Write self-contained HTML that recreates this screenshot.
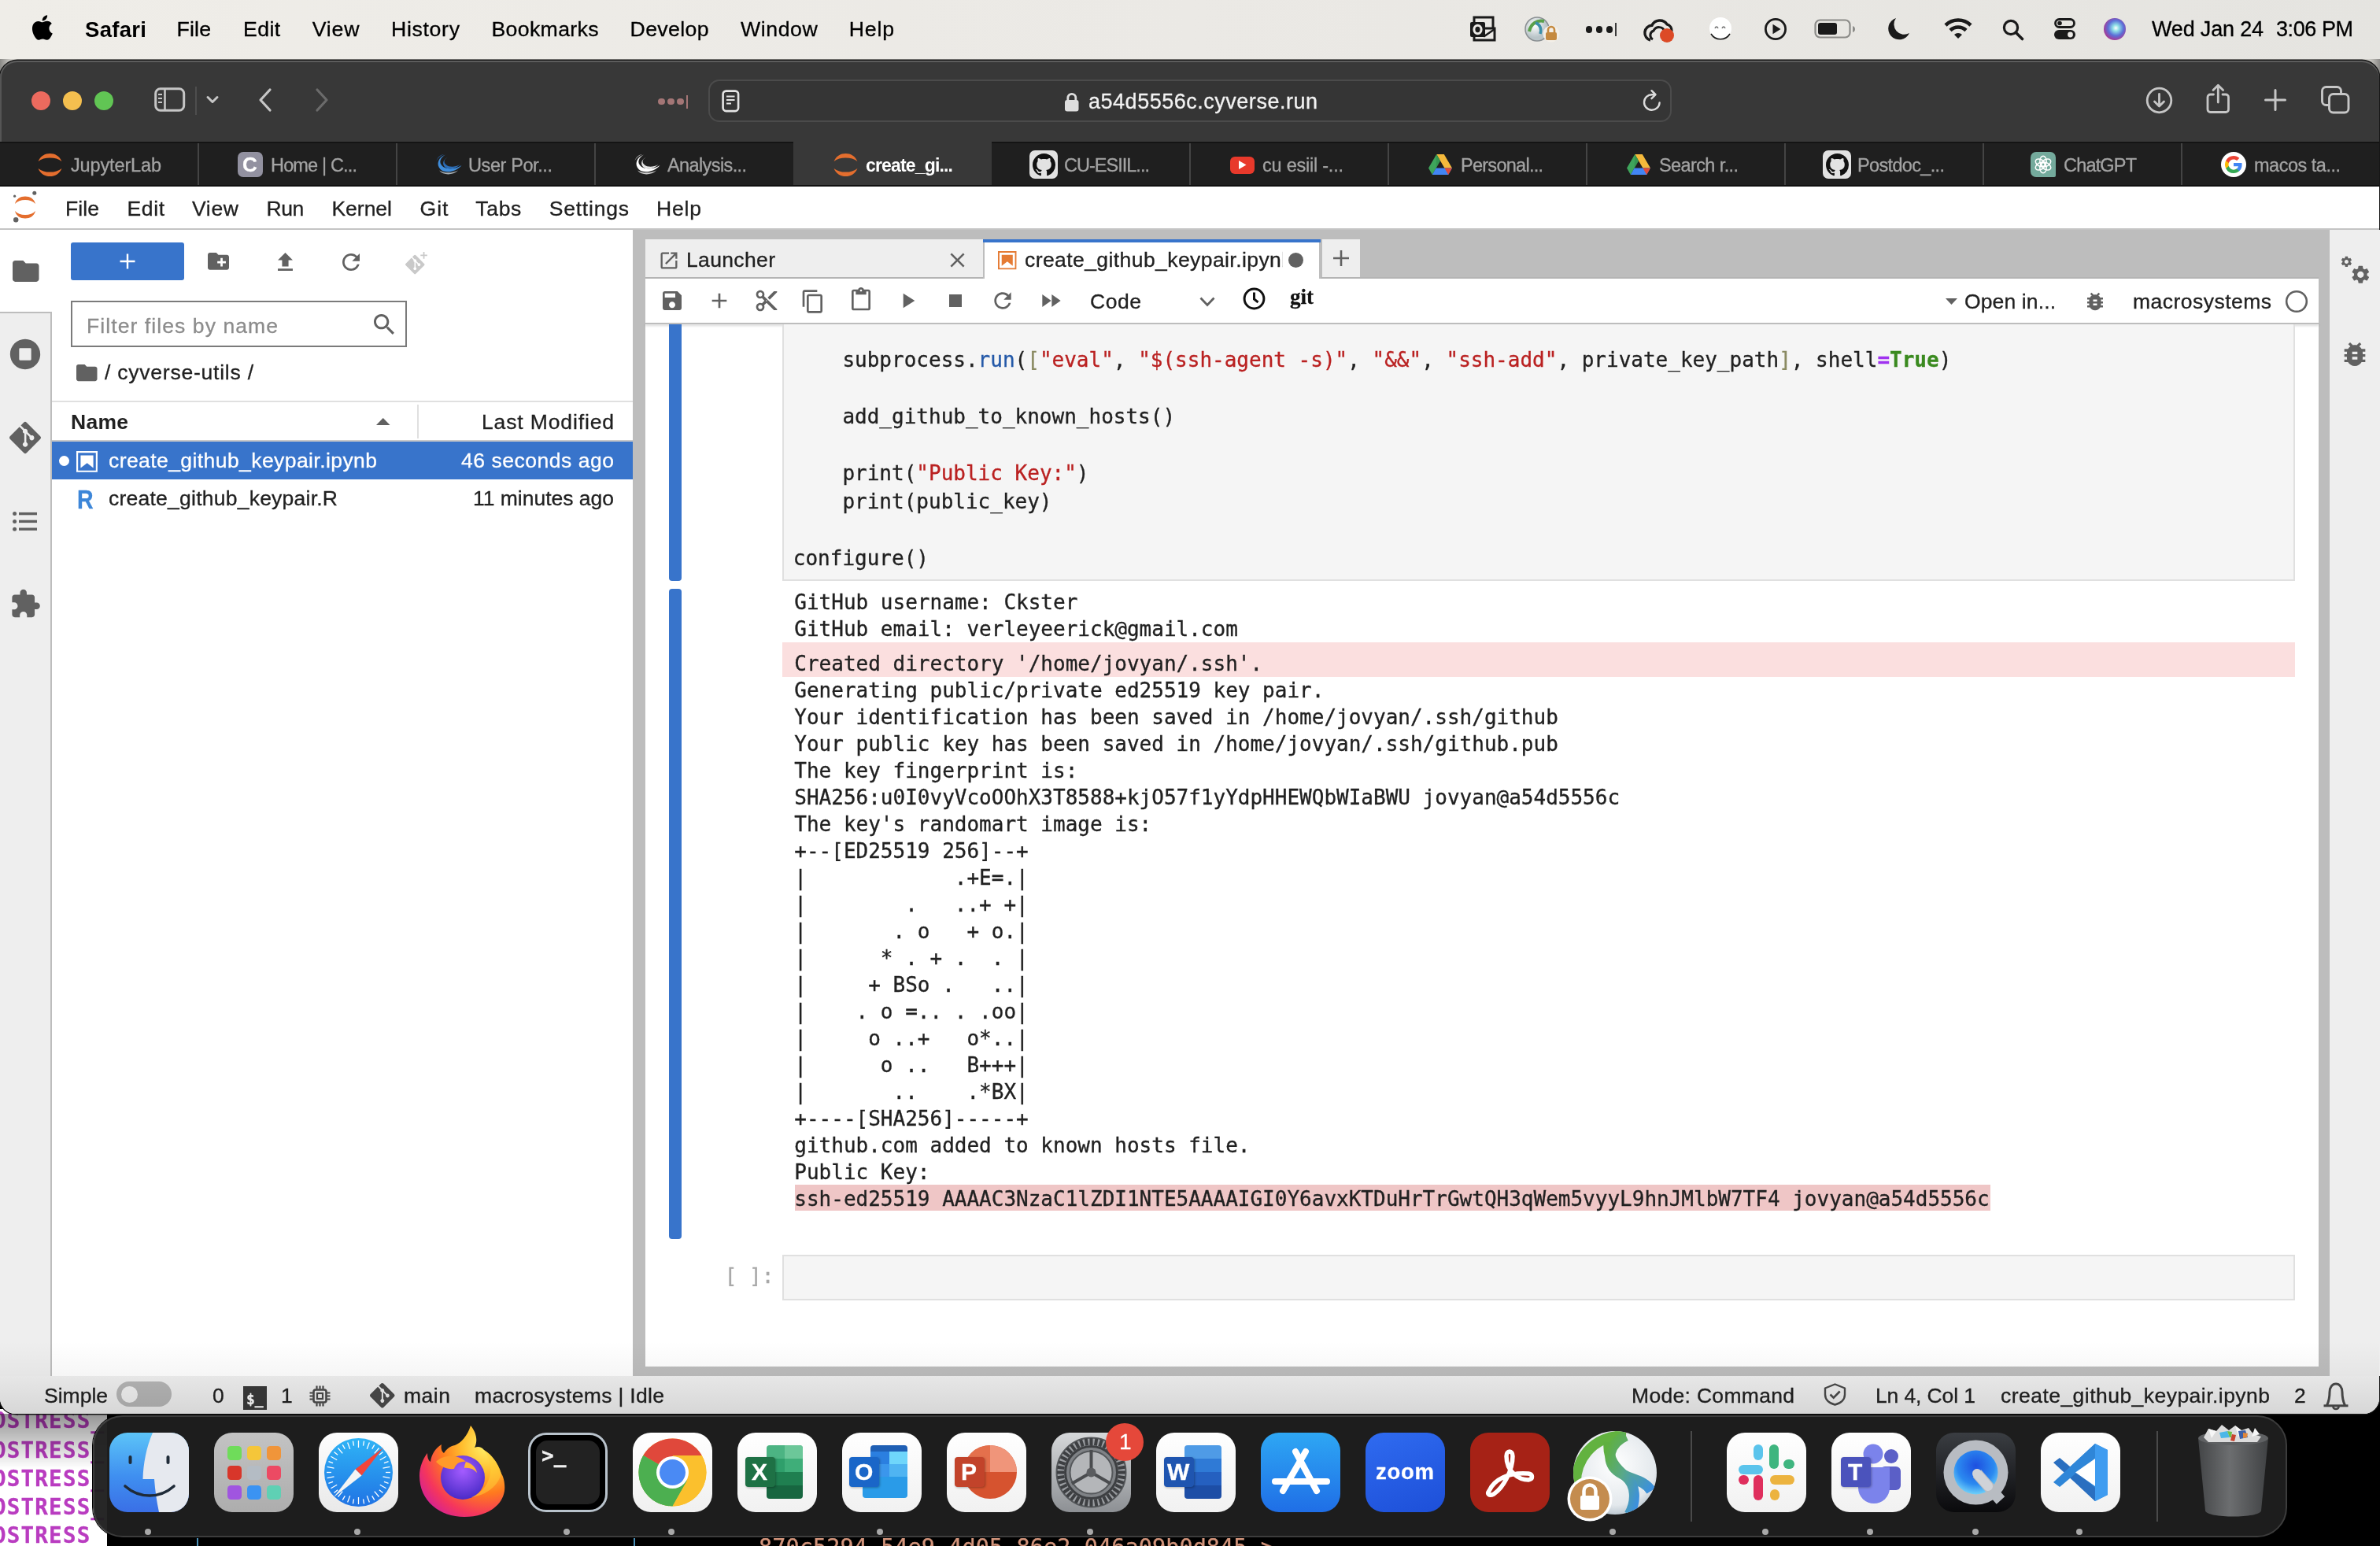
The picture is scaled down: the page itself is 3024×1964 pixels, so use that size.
<!DOCTYPE html>
<html lang="en"><head><meta charset="utf-8"><title>create_github_keypair.ipynb - JupyterLab</title>
<style>
html,body{margin:0;padding:0;}
body{width:3024px;height:1964px;overflow:hidden;background:#000;position:relative;font-family:"Liberation Sans",sans-serif;}
div,span.t,svg,pre{position:absolute;}
span.t{white-space:pre;-webkit-text-stroke:.3px;}
svg{overflow:visible;}
#w{left:0;top:0;width:3024px;height:1964px;will-change:transform;}
pre{-webkit-text-stroke:.32px;margin:0;font-family:"DejaVu Sans Mono","Liberation Mono",monospace;font-size:26px;color:#212121;}
</style></head>
<body>
<div id="w">
<div style="left:0px;top:1790px;width:3024px;height:174px;background:#000;"></div>
<div style="left:0px;top:1790px;width:136px;height:174px;background:#fff;"></div>
<span id="t0" class="t" style="top:1786.49px;font-size:27.5px;line-height:36px;color:#b93cc0;left:-9px;font-weight:700;font-family:'DejaVu Sans Mono', 'Liberation Mono', monospace;letter-spacing:1.221px;">OSTRESS_</span>
<span id="t1" class="t" style="top:1823.99px;font-size:27.5px;line-height:36px;color:#b93cc0;left:-9px;font-weight:700;font-family:'DejaVu Sans Mono', 'Liberation Mono', monospace;letter-spacing:1.221px;">OSTRESS_</span>
<span id="t2" class="t" style="top:1860.49px;font-size:27.5px;line-height:36px;color:#b93cc0;left:-9px;font-weight:700;font-family:'DejaVu Sans Mono', 'Liberation Mono', monospace;letter-spacing:1.221px;">OSTRESS_</span>
<span id="t3" class="t" style="top:1896.49px;font-size:27.5px;line-height:36px;color:#b93cc0;left:-9px;font-weight:700;font-family:'DejaVu Sans Mono', 'Liberation Mono', monospace;letter-spacing:1.221px;">OSTRESS_</span>
<span id="t4" class="t" style="top:1932.49px;font-size:27.5px;line-height:36px;color:#b93cc0;left:-9px;font-weight:700;font-family:'DejaVu Sans Mono', 'Liberation Mono', monospace;letter-spacing:1.221px;">OSTRESS_</span>
<div style="left:0px;top:1796px;width:136px;height:70px;background:linear-gradient(180deg,rgba(0,0,0,.42),rgba(0,0,0,0));"></div>
<div style="left:250px;top:1950px;width:2px;height:14px;background:#4a90b8;"></div>
<div style="left:805px;top:1950px;width:2px;height:14px;background:#4a90b8;"></div>
<span id="t5" class="t" style="top:1947.14px;font-size:28.5px;line-height:37px;color:#d4957c;left:964px;font-family:'DejaVu Sans Mono', 'Liberation Mono', monospace;letter-spacing:0.080px;">870c5294-54e9-4d05-86e2-046a09b0d845 &gt;</span>
<div style="left:0px;top:0px;width:3024px;height:75px;background:linear-gradient(90deg,#efede8 0%,#ebe9e5 50%,#e5e4e0 100%);"></div>
<div style="left:0px;top:75px;width:3024px;height:30px;background:linear-gradient(90deg,#8a8986 0,#cfcdc8 14px,#d4d2cd 50%,#cfcdc8 3010px,#8a8986 100%);"></div>
<svg style="left:41px;top:19px;" width="26" height="32" viewBox="3.9 2 16.4 20"><path d="M18.71 19.5c-.83 1.24-1.71 2.45-3.05 2.47-1.34.03-1.77-.79-3.29-.79-1.53 0-2 .77-3.27.82-1.31.05-2.3-1.32-3.14-2.53C4.25 17 2.94 12.45 4.7 9.39c.87-1.52 2.43-2.48 4.12-2.51 1.28-.02 2.5.87 3.29.87.78 0 2.26-1.07 3.81-.91.65.03 2.47.26 3.64 1.98-.09.06-2.17 1.28-2.15 3.81.03 3.02 2.65 4.03 2.68 4.04-.03.07-.42 1.44-1.38 2.83M13 3.5c.73-.83 1.94-1.46 2.94-1.5.13 1.17-.34 2.35-1.04 3.19-.69.85-1.83 1.51-2.95 1.42-.15-1.15.41-2.35 1.05-3.11z" fill="#000"/></svg>
<span id="t6" class="t" style="top:19.67px;font-size:27.5px;line-height:36px;color:#000;left:108px;font-weight:700;letter-spacing:0.312px;-webkit-text-stroke:0;">Safari</span>
<span id="t7" class="t" style="top:20.44px;font-size:26.7px;line-height:35px;color:#000;left:224.6px;letter-spacing:0.128px;">File</span>
<span id="t8" class="t" style="top:20.44px;font-size:26.7px;line-height:35px;color:#000;left:308.9px;letter-spacing:0.467px;">Edit</span>
<span id="t9" class="t" style="top:20.44px;font-size:26.7px;line-height:35px;color:#000;left:396.7px;letter-spacing:0.808px;">View</span>
<span id="t10" class="t" style="top:20.44px;font-size:26.7px;line-height:35px;color:#000;left:497px;letter-spacing:0.659px;">History</span>
<span id="t11" class="t" style="top:20.44px;font-size:26.7px;line-height:35px;color:#000;left:624.5px;letter-spacing:0.314px;">Bookmarks</span>
<span id="t12" class="t" style="top:20.44px;font-size:26.7px;line-height:35px;color:#000;left:800.6px;letter-spacing:0.330px;">Develop</span>
<span id="t13" class="t" style="top:20.44px;font-size:26.7px;line-height:35px;color:#000;left:941px;letter-spacing:0.576px;">Window</span>
<span id="t14" class="t" style="top:20.44px;font-size:26.7px;line-height:35px;color:#000;left:1078.7px;letter-spacing:0.803px;">Help</span>
<span id="t15" class="t" style="top:20.34px;font-size:27px;line-height:35px;color:#000;left:2734px;letter-spacing:-0.179px;">Wed Jan 24</span>
<span id="t16" class="t" style="top:20.34px;font-size:27px;line-height:35px;color:#000;left:2892px;letter-spacing:-0.427px;">3:06 PM</span>
<svg style="left:1867px;top:20px;" width="34" height="34" viewBox="0 0 34 34"><rect x="6" y="2" width="24" height="20" fill="none" stroke="#1a1a1a" stroke-width="3"/><rect x="6" y="16" width="26" height="15" fill="#ebe9e5" stroke="#1a1a1a" stroke-width="3"/><path d="M7 17l12 9 13-9" fill="none" stroke="#1a1a1a" stroke-width="2.5"/><rect x="1" y="8" width="19" height="19" rx="2" fill="#1a1a1a"/><ellipse cx="10.5" cy="17.5" rx="4.6" ry="5.2" fill="none" stroke="#ebe9e5" stroke-width="3"/></svg>
<svg style="left:1937px;top:20px;" width="46" height="34" viewBox="0 0 46 34"><defs><radialGradient id="gl" cx="40%" cy="35%"><stop offset="0" stop-color="#fff"/><stop offset="1" stop-color="#b9c4c8"/></radialGradient></defs><circle cx="16" cy="17" r="15" fill="url(#gl)" stroke="#8a8f92" stroke-width="1.5"/><path d="M6 20c2-10 10-15 19-13" fill="none" stroke="#5aa04a" stroke-width="4"/><path d="M14 9c6 2 8 8 6 14" fill="none" stroke="#3b8fa8" stroke-width="3.5"/><circle cx="34" cy="23" r="10.5" fill="#f3efe8"/><rect x="27" y="21" width="14" height="10" rx="2" fill="#c58a3f"/><path d="M30 21v-3a4 4 0 0 1 8 0v3" fill="none" stroke="#c58a3f" stroke-width="2.6"/></svg>
<div style="left:2014.5px;top:33px;width:8.6px;height:8.6px;background:#1a1a1a;border-radius:50%;"></div>
<div style="left:2027.7px;top:33px;width:8.6px;height:8.6px;background:#1a1a1a;border-radius:50%;"></div>
<div style="left:2040.9px;top:33px;width:8.6px;height:8.6px;background:#1a1a1a;border-radius:50%;"></div>
<div style="left:2052px;top:29px;width:2.4px;height:17px;background:#3a3a3a;"></div>
<svg style="left:2086px;top:20px;" width="46" height="36" viewBox="0 0 46 36"><path d="M11 31a9.5 9.5 0 0 1 2-18.7 11 11 0 0 1 19-1.5 8.5 8.5 0 0 1 6 9" fill="none" stroke="#1a1a1a" stroke-width="3.4"/><path d="M14 30a6 6 0 0 1 1-11 c3-6 12-6 14 1" fill="none" stroke="#1a1a1a" stroke-width="3"/><circle cx="32" cy="25" r="9" fill="#dc4a26"/></svg>
<svg style="left:2171px;top:21px;" width="30" height="32" viewBox="0 0 30 32"><circle cx="15" cy="15" r="14" fill="#fff"/><path d="M3 22a14 14 0 0 0 24 0" fill="none" stroke="#1a1a1a" stroke-width="1.6"/><path d="M8 15q2-4 4 0M17 15q2-4 4 0" fill="none" stroke="#777" stroke-width="1.6"/></svg>
<svg style="left:2241px;top:22px;" width="30" height="30" viewBox="0 0 30 30"><circle cx="15" cy="15" r="12.6" fill="none" stroke="#1a1a1a" stroke-width="2.8"/><path d="M11.5 8.8v12.4l10-6.2z" fill="#1a1a1a"/></svg>
<svg style="left:2305px;top:24px;" width="54" height="26" viewBox="0 0 54 26"><rect x="1.5" y="1.5" width="44" height="22" rx="6" fill="none" stroke="#8b8b88" stroke-width="2.2"/><rect x="5" y="5" width="24" height="15" rx="3" fill="#1a1a1a"/><path d="M49 9v8q3-1 3-4t-3-4z" fill="#8b8b88"/></svg>
<svg style="left:2398px;top:22px;" width="28" height="30" viewBox="0 0 28 30"><path d="M11 1a14 14 0 1 0 17 19A13 13 0 0 1 11 1z" fill="#1a1a1a"/></svg>
<svg style="left:2470px;top:22px;" width="36" height="28" viewBox="0 0 36 28"><path d="M2 10a23 23 0 0 1 32 0" fill="none" stroke="#1a1a1a" stroke-width="4.6"/><path d="M8 16.5a14.5 14.5 0 0 1 20 0" fill="none" stroke="#1a1a1a" stroke-width="4.6"/><path d="M13 22l5 5 5-5a7.5 7.5 0 0 0-10 0z" fill="#1a1a1a"/></svg>
<svg style="left:2544px;top:24px;" width="28" height="28" viewBox="0 0 28 28"><circle cx="11" cy="11" r="8.6" fill="none" stroke="#1a1a1a" stroke-width="3.2"/><path d="M17.5 17.5l8 8" stroke="#1a1a1a" stroke-width="3.6" stroke-linecap="round"/></svg>
<svg style="left:2610px;top:23px;" width="28" height="28" viewBox="0 0 28 28"><rect x="1.5" y="1.5" width="24" height="10" rx="5" fill="none" stroke="#1a1a1a" stroke-width="2.8"/><circle cx="7" cy="6.5" r="2.8" fill="#1a1a1a"/><rect x="0" y="15" width="27" height="12" rx="6" fill="#1a1a1a"/><circle cx="20.5" cy="21" r="3.4" fill="#ebe9e5"/></svg>
<div style="left:2673px;top:23px;width:28px;height:28px;background:radial-gradient(circle at 55% 45%,#fff 0%,#8fe0e6 18%,#5b6fd8 45%,#a13d9a 70%,#d94a7a 100%);border-radius:50%;"></div>
<div style="left:0px;top:76.5px;width:3023px;height:1719.5px;background:#383838;border-radius:22px 22px 20px 20px;box-shadow:inset 0 2px 0 #5c5c5c,inset 2px 0 0 #555,0 0 0 1.500px #161616;overflow:hidden;"></div>
<div style="left:0px;top:180px;width:3023px;height:57px;background:#1f1f1f;border-top:2px solid #141414;box-sizing:border-box;"></div>
<div style="left:1008px;top:180px;width:252px;height:56px;background:#383838;"></div>
<div style="left:251px;top:182px;width:2px;height:54px;background:#444;"></div>
<div style="left:503px;top:182px;width:2px;height:54px;background:#444;"></div>
<div style="left:755px;top:182px;width:2px;height:54px;background:#444;"></div>
<div style="left:1511px;top:182px;width:2px;height:54px;background:#444;"></div>
<div style="left:1763px;top:182px;width:2px;height:54px;background:#444;"></div>
<div style="left:2015px;top:182px;width:2px;height:54px;background:#444;"></div>
<div style="left:2267px;top:182px;width:2px;height:54px;background:#444;"></div>
<div style="left:2519px;top:182px;width:2px;height:54px;background:#444;"></div>
<div style="left:2771px;top:182px;width:2px;height:54px;background:#444;"></div>
<div style="left:0px;top:235px;width:3023px;height:2px;background:#101010;"></div>
<div style="left:900px;top:101px;width:1224px;height:54px;background:#353535;border-radius:14px;border:2px solid #4b4b4b;box-sizing:border-box;"></div>
<div style="left:40px;top:116px;width:24px;height:24px;background:#ec6a5e;border-radius:50%;"></div>
<div style="left:80px;top:116px;width:24px;height:24px;background:#f4bf4f;border-radius:50%;"></div>
<div style="left:120px;top:116px;width:24px;height:24px;background:#61c554;border-radius:50%;"></div>
<svg style="left:196px;top:111px;" width="40" height="32" viewBox="0 0 40 32"><rect x="1.7" y="1.7" width="36" height="27.6" rx="6" fill="none" stroke="#c6c6c6" stroke-width="3"/><path d="M13.500 2v27" stroke="#c6c6c6" stroke-width="2.6"/><path d="M5 9h5M5 14h5M5 19h5" stroke="#c6c6c6" stroke-width="2"/></svg>
<div style="left:248px;top:110px;width:2px;height:36px;background:#4e4e4e;"></div>
<svg style="left:262px;top:121px;" width="16" height="12" viewBox="0 0 16 12"><path d="M2 2.500l6 6 6-6" fill="none" stroke="#c6c6c6" stroke-width="3" stroke-linecap="round" stroke-linejoin="round"/></svg>
<svg style="left:328px;top:112px;" width="18" height="30" viewBox="0 0 18 30"><path d="M15 2L3 15l12 13" fill="none" stroke="#c6c6c6" stroke-width="3.2" stroke-linecap="round" stroke-linejoin="round"/></svg>
<svg style="left:400px;top:112px;" width="18" height="30" viewBox="0 0 18 30"><path d="M3 2l12 13L3 28" fill="none" stroke="#6b6b6b" stroke-width="3.2" stroke-linecap="round" stroke-linejoin="round"/></svg>
<div style="left:836px;top:124.5px;width:8.5px;height:8.5px;background:#a47676;border-radius:50%;"></div>
<div style="left:848px;top:124.5px;width:8.5px;height:8.5px;background:#a47676;border-radius:50%;"></div>
<div style="left:860px;top:124.5px;width:8.5px;height:8.5px;background:#a47676;border-radius:50%;"></div>
<div style="left:871.5px;top:121px;width:2.5px;height:17px;background:#a47676;"></div>
<svg style="left:917px;top:114px;" width="24" height="29" viewBox="0 0 24 29"><rect x="1.600" y="1.600" width="19.500" height="25.500" rx="4" fill="none" stroke="#e4e4e4" stroke-width="2.600"/><path d="M6 8.500h10.500M6 13h10.500M6 17.500h6" stroke="#e4e4e4" stroke-width="2"/></svg>
<svg style="left:1352px;top:116px;" width="20" height="27" viewBox="0 0 20 27"><rect x="1" y="11" width="17.500" height="14.500" rx="3" fill="#dedede"/><path d="M4.800 12V8.300a5 5 0 0 1 10 0V12" fill="none" stroke="#dedede" stroke-width="2.800"/></svg>
<span id="t17" class="t" style="top:112.14px;font-size:27px;line-height:35px;color:#f2f2f2;left:1383px;letter-spacing:0.516px;">a54d5556c.cyverse.run</span>
<svg style="left:2086px;top:114px;" width="26" height="29" viewBox="0 0 26 29"><path d="M22.600 16.500A9.800 9.800 0 1 1 13 6.200h3" fill="none" stroke="#dcdcdc" stroke-width="2.400" stroke-linecap="round"/><path d="M12.500 1.200l5 5-5 5" fill="none" stroke="#dcdcdc" stroke-width="2.400" stroke-linecap="round" stroke-linejoin="round"/></svg>
<svg style="left:2726px;top:110px;" width="35" height="35" viewBox="0 0 35 35"><circle cx="17.500" cy="17.500" r="15.300" fill="none" stroke="#c6c6c6" stroke-width="2.800"/><path d="M17.500 9.500v15M11.500 19l6 6 6-6" fill="none" stroke="#c6c6c6" stroke-width="2.800" stroke-linecap="round" stroke-linejoin="round"/></svg>
<svg style="left:2803px;top:106px;" width="31" height="39" viewBox="0 0 31 39"><path d="M9.500 14H5.500a3.500 3.500 0 0 0-3.500 3.500V33a3.500 3.500 0 0 0 3.500 3.500h19.500A3.500 3.500 0 0 0 28.500 33V17.500A3.500 3.500 0 0 0 25 14h-4" fill="none" stroke="#c6c6c6" stroke-width="2.800" stroke-linecap="round"/><path d="M15.300 24V2.500M9 8.500l6.300-6.300 6.300 6.300" fill="none" stroke="#c6c6c6" stroke-width="2.800" stroke-linecap="round" stroke-linejoin="round"/></svg>
<svg style="left:2877px;top:113px;" width="28" height="28" viewBox="0 0 28 28"><path d="M14 1.500v25M1.500 14h25" stroke="#c6c6c6" stroke-width="3" stroke-linecap="round"/></svg>
<svg style="left:2949px;top:109px;" width="38" height="36" viewBox="0 0 38 36"><rect x="1.500" y="1.500" width="24" height="23" rx="5" fill="none" stroke="#c6c6c6" stroke-width="2.900"/><rect x="10.500" y="10.500" width="24.500" height="23.500" rx="5" fill="#383838" stroke="#c6c6c6" stroke-width="2.900"/></svg>
<svg style="left:48px;top:193.5px;" width="31" height="31" viewBox="1.500 2 28 27"><path d="M2 11.5C4.5 5.2 10 2.4 15.5 2.4S26.5 5.2 29 11.5C25.5 8.6 20.8 7.3 15.5 7.3S5.5 8.6 2 11.5z" fill="#e46e2e"/><path d="M2 19.5C4.5 25.8 10 28.6 15.5 28.6S26.5 25.8 29 19.5C25.5 22.4 20.8 23.7 15.5 23.7S5.5 22.4 2 19.5z" fill="#e46e2e"/></svg>
<span id="t18" class="t" style="top:194.65px;font-size:23.5px;line-height:31px;color:#a3a3a3;left:90px;letter-spacing:-0.142px;">JupyterLab</span>
<div style="left:302px;top:193px;width:32px;height:32px;background:#9291a0;border-radius:7px;"></div>
<span id="t19" class="t" style="top:191.99px;font-size:26px;line-height:34px;color:#fff;left:308px;font-weight:700;">C</span>
<span id="t20" class="t" style="top:194.65px;font-size:23.5px;line-height:31px;color:#a3a3a3;left:344px;letter-spacing:-0.842px;">Home | C...</span>
<svg style="left:553px;top:194px;" width="34" height="30" viewBox="0 0 34 30"><path d="M13 2.500C4 5.500 0.500 15 6.500 21s20 3.500 27-5C26.500 21 14 22 9 17S6.500 6.500 13 2.500z" fill="#3f8ddb"/><path d="M15.500 6C9.500 9 8.500 15 12.500 18.500s14 2 19-3.500C25.500 18.500 17.500 18.500 14 15.500S10.500 9 15.500 6z" fill="#2b6cb6"/><path d="M5 22.500c5.500 6.500 17 6.500 24 0-7 3.500-17 4-24 0z" fill="#a7b0b6"/><path d="M11 2C7 2.500 3 5.500 1.500 10 4 6 7.500 3.500 11 2z" fill="#2b6cb6" opacity=".7"/></svg>
<span id="t21" class="t" style="top:194.65px;font-size:23.5px;line-height:31px;color:#a3a3a3;left:595px;letter-spacing:-0.402px;">User Por...</span>
<svg style="left:805px;top:194px;" width="34" height="30" viewBox="0 0 34 30"><path d="M13 2.500C4 5.500 0.500 15 6.500 21s20 3.500 27-5C26.500 21 14 22 9 17S6.500 6.500 13 2.500z" fill="#ffffff"/><path d="M15.500 6C9.500 9 8.500 15 12.500 18.500s14 2 19-3.500C25.500 18.500 17.500 18.500 14 15.500S10.500 9 15.500 6z" fill="#e4e4e4"/><path d="M5 22.500c5.500 6.500 17 6.500 24 0-7 3.500-17 4-24 0z" fill="#d0d0d0"/><path d="M11 2C7 2.500 3 5.500 1.500 10 4 6 7.500 3.500 11 2z" fill="#e4e4e4" opacity=".7"/></svg>
<span id="t22" class="t" style="top:194.65px;font-size:23.5px;line-height:31px;color:#a3a3a3;left:848px;letter-spacing:-0.609px;">Analysis...</span>
<svg style="left:1058.5px;top:193.5px;" width="31" height="31" viewBox="1.500 2 28 27"><path d="M2 11.5C4.5 5.2 10 2.4 15.5 2.4S26.5 5.2 29 11.5C25.5 8.6 20.8 7.3 15.5 7.3S5.5 8.6 2 11.5z" fill="#e46e2e"/><path d="M2 19.5C4.5 25.8 10 28.6 15.5 28.6S26.5 25.8 29 19.5C25.5 22.4 20.8 23.7 15.5 23.7S5.5 22.4 2 19.5z" fill="#e46e2e"/></svg>
<span id="t23" class="t" style="top:195.33px;font-size:23px;line-height:30px;color:#fff;left:1100px;font-weight:700;letter-spacing:-0.835px;-webkit-text-stroke:0;">create_gi...</span>
<div style="left:1308px;top:191px;width:36px;height:36px;background:#e2e2e2;border-radius:7px;"></div>
<svg style="left:1311.5px;top:194.5px;" width="29" height="29" viewBox="0 0 16 16"><path d="M8 0C3.58 0 0 3.58 0 8c0 3.54 2.29 6.53 5.47 7.59.4.07.55-.17.55-.38 0-.19-.01-.82-.01-1.49-2.01.37-2.53-.49-2.69-.94-.09-.23-.48-.94-.82-1.13-.28-.15-.68-.52-.01-.53.63-.01 1.08.58 1.23.82.72 1.21 1.87.87 2.33.66.07-.52.28-.87.51-1.07-1.78-.2-3.64-.89-3.64-3.95 0-.87.31-1.59.82-2.15-.08-.2-.36-1.02.08-2.12 0 0 .67-.21 2.2.82.64-.18 1.32-.27 2-.27s1.36.09 2 .27c1.53-1.04 2.2-.82 2.2-.82.44 1.1.16 1.92.08 2.12.51.56.82 1.27.82 2.15 0 3.07-1.87 3.75-3.65 3.95.29.25.54.73.54 1.48 0 1.07-.01 1.93-.01 2.2 0 .21.15.46.55.38A8.01 8.01 0 0 0 16 8c0-4.42-3.58-8-8-8z" fill="#111"/></svg>
<span id="t24" class="t" style="top:194.65px;font-size:23.5px;line-height:31px;color:#a3a3a3;left:1352px;letter-spacing:-0.984px;">CU-ESIIL...</span>
<div style="left:2316px;top:191px;width:36px;height:36px;background:#e2e2e2;border-radius:7px;"></div>
<svg style="left:2319.5px;top:194.5px;" width="29" height="29" viewBox="0 0 16 16"><path d="M8 0C3.58 0 0 3.58 0 8c0 3.54 2.29 6.53 5.47 7.59.4.07.55-.17.55-.38 0-.19-.01-.82-.01-1.49-2.01.37-2.53-.49-2.69-.94-.09-.23-.48-.94-.82-1.13-.28-.15-.68-.52-.01-.53.63-.01 1.08.58 1.23.82.72 1.21 1.87.87 2.33.66.07-.52.28-.87.51-1.07-1.78-.2-3.64-.89-3.64-3.95 0-.87.31-1.59.82-2.15-.08-.2-.36-1.02.08-2.12 0 0 .67-.21 2.2.82.64-.18 1.32-.27 2-.27s1.36.09 2 .27c1.53-1.04 2.2-.82 2.2-.82.44 1.1.16 1.92.08 2.12.51.56.82 1.27.82 2.15 0 3.07-1.87 3.75-3.65 3.95.29.25.54.73.54 1.48 0 1.07-.01 1.93-.01 2.2 0 .21.15.46.55.38A8.01 8.01 0 0 0 16 8c0-4.42-3.58-8-8-8z" fill="#111"/></svg>
<span id="t25" class="t" style="top:194.65px;font-size:23.5px;line-height:31px;color:#a3a3a3;left:2360px;letter-spacing:-0.658px;">Postdoc_...</span>
<div style="left:1562.5px;top:198.5px;width:31.5px;height:22px;background:#e8392b;border-radius:6px;"></div>
<svg style="left:1573.5px;top:204px;" width="10" height="11" viewBox="0 0 10 11"><path d="M0 0l9.500 5.500L0 11z" fill="#fff"/></svg>
<span id="t26" class="t" style="top:194.65px;font-size:23.5px;line-height:31px;color:#a3a3a3;left:1604px;letter-spacing:-0.232px;">cu esiil -...</span>
<svg style="left:1815px;top:195.5px;" width="30" height="27" viewBox="0 0 30 27"><path d="M10.2 0h9.6L30 17.6h-9.6z" fill="#f5b93b"/><path d="M10.2 0L0 17.6l4.8 8.3L15 8.3z" fill="#3ea55b"/><path d="M4.8 25.9h20.4L30 17.6H9.6z" fill="#4285f4"/><path d="M20.4 17.6H30l-4.8 8.3z" fill="#e04a3a"/><path d="M15 8.3L10.2 0 9.6 17.6z" fill="#2d8a49" opacity=".55"/></svg>
<span id="t27" class="t" style="top:194.65px;font-size:23.5px;line-height:31px;color:#a3a3a3;left:1856px;letter-spacing:-0.734px;">Personal...</span>
<svg style="left:2067px;top:195.5px;" width="30" height="27" viewBox="0 0 30 27"><path d="M10.2 0h9.6L30 17.6h-9.6z" fill="#f5b93b"/><path d="M10.2 0L0 17.6l4.8 8.3L15 8.3z" fill="#3ea55b"/><path d="M4.8 25.9h20.4L30 17.6H9.6z" fill="#4285f4"/><path d="M20.4 17.6H30l-4.8 8.3z" fill="#e04a3a"/><path d="M15 8.3L10.2 0 9.6 17.6z" fill="#2d8a49" opacity=".55"/></svg>
<span id="t28" class="t" style="top:194.65px;font-size:23.5px;line-height:31px;color:#a3a3a3;left:2108px;letter-spacing:-0.611px;">Search r...</span>
<div style="left:2580px;top:193px;width:32px;height:32px;background:#74aa9c;border-radius:7px 7px 2px 7px;"></div>
<svg style="left:2584px;top:197px;" width="24" height="24" viewBox="0 0 24 24"><ellipse cx="12" cy="7.800" rx="4.200" ry="6.600" fill="none" stroke="#fff" stroke-width="1.500" transform="rotate(0 12 12)"/><ellipse cx="12" cy="7.800" rx="4.200" ry="6.600" fill="none" stroke="#fff" stroke-width="1.500" transform="rotate(60 12 12)"/><ellipse cx="12" cy="7.800" rx="4.200" ry="6.600" fill="none" stroke="#fff" stroke-width="1.500" transform="rotate(120 12 12)"/><ellipse cx="12" cy="7.800" rx="4.200" ry="6.600" fill="none" stroke="#fff" stroke-width="1.500" transform="rotate(180 12 12)"/><ellipse cx="12" cy="7.800" rx="4.200" ry="6.600" fill="none" stroke="#fff" stroke-width="1.500" transform="rotate(240 12 12)"/><ellipse cx="12" cy="7.800" rx="4.200" ry="6.600" fill="none" stroke="#fff" stroke-width="1.500" transform="rotate(300 12 12)"/></svg>
<span id="t29" class="t" style="top:194.65px;font-size:23.5px;line-height:31px;color:#a3a3a3;left:2622px;letter-spacing:-0.826px;">ChatGPT</span>
<div style="left:2822px;top:193px;width:32px;height:32px;background:#fff;border-radius:50%;"></div>
<svg style="left:2827px;top:198px;" width="22" height="22" viewBox="0 0 22 22"><path d="M21.600 11.250c0-.780-.070-1.530-.200-2.250H11v4.260h5.920a5.060 5.060 0 0 1-2.200 3.320v2.770h3.570c2.080-1.920 3.310-4.740 3.310-8.100z" fill="#4285f4"/><path d="M11 22c2.970 0 5.460-.980 7.280-2.660l-3.570-2.770c-.980.660-2.230 1.060-3.710 1.060-2.860 0-5.290-1.930-6.160-4.530H1.180v2.840A11 11 0 0 0 11 22z" fill="#34a853"/><path d="M4.840 13.100a6.600 6.600 0 0 1 0-4.200V6.060H1.180a11 11 0 0 0 0 9.880l3.660-2.840z" fill="#fbbc05"/><path d="M11 4.380c1.620 0 3.060.560 4.210 1.640l3.150-3.150C16.450.990 13.970 0 11 0A11 11 0 0 0 1.180 6.060l3.660 2.840C5.710 6.300 8.140 4.380 11 4.380z" fill="#ea4335"/></svg>
<span id="t30" class="t" style="top:194.65px;font-size:23.5px;line-height:31px;color:#a3a3a3;left:2864px;letter-spacing:-0.494px;">macos ta...</span>
<div style="left:0px;top:237px;width:3023px;height:1559px;background:#fff;border-radius:0 0 20px 20px;overflow:hidden;"></div>
<div style="left:0px;top:290px;width:3023px;height:2px;background:#c4c4c4;"></div>
<div style="left:0px;top:292px;width:3023px;height:1456px;background:#bdbdbd;"></div>
<div style="left:0px;top:292px;width:64px;height:1456px;background:#eeeeee;"></div>
<div style="left:0px;top:292px;width:66px;height:104px;background:#fff;"></div>
<div style="left:0px;top:396px;width:64px;height:2px;background:#bdbdbd;"></div>
<div style="left:66px;top:292px;width:738px;height:1456px;background:#fff;"></div>
<div style="left:820px;top:354px;width:2126px;height:1382px;background:#fff;"></div>
<div style="left:2960px;top:292px;width:64px;height:1456px;background:#eeeeee;"></div>
<div style="left:0px;top:1748px;width:3023px;height:48px;background:#f0f0f0;border-radius:0 0 20px 20px;"></div>
<svg style="left:16px;top:242px;" width="32" height="41" viewBox="0 0 32 41"><path d="M3 17C4.500 10.500 10 7.500 16 7.500S27.500 10.500 29 17C26 13.600 21.500 12 16 12S6 13.600 3 17z" fill="#e46e2e"/><path d="M3 26c1.500 6.500 7 9.500 13 9.500s11.500-3 13-9.500c-3 3.400-7.500 5-13 5S6 29.400 3 26z" fill="#e46e2e"/><circle cx="27.800" cy="3.200" r="2.500" fill="#616161"/><circle cx="4.200" cy="37.300" r="3.200" fill="#616161"/><circle cx="2.600" cy="7.200" r="1.600" fill="#616161"/></svg>
<span id="t31" class="t" style="top:247.81px;font-size:26.5px;line-height:34px;color:#212121;left:83px;letter-spacing:0.099px;">File</span>
<span id="t32" class="t" style="top:247.81px;font-size:26.5px;line-height:34px;color:#212121;left:161.5px;letter-spacing:0.609px;">Edit</span>
<span id="t33" class="t" style="top:247.81px;font-size:26.5px;line-height:34px;color:#212121;left:244px;letter-spacing:0.677px;">View</span>
<span id="t34" class="t" style="top:247.81px;font-size:26.5px;line-height:34px;color:#212121;left:338.6px;letter-spacing:-0.463px;">Run</span>
<span id="t35" class="t" style="top:247.81px;font-size:26.5px;line-height:34px;color:#212121;left:421.4px;">Kernel</span>
<span id="t36" class="t" style="top:247.81px;font-size:26.5px;line-height:34px;color:#212121;left:533.5px;letter-spacing:1.062px;">Git</span>
<span id="t37" class="t" style="top:247.81px;font-size:26.5px;line-height:34px;color:#212121;left:604.3px;letter-spacing:0.672px;">Tabs</span>
<span id="t38" class="t" style="top:247.81px;font-size:26.5px;line-height:34px;color:#212121;left:697.7px;letter-spacing:0.791px;">Settings</span>
<span id="t39" class="t" style="top:247.81px;font-size:26.5px;line-height:34px;color:#212121;left:834px;letter-spacing:0.828px;">Help</span>
<svg style="left:15.5px;top:331px;" width="33.5" height="27" viewBox="2 4 20 16"><path d="M10 4H4c-1.100 0-1.990.900-1.990 2L2 18c0 1.100.900 2 2 2h16c1.100 0 2-.900 2-2V8c0-1.100-.900-2-2-2h-8l-2-2z" fill="#616161"/></svg>
<svg style="left:9.0px;top:427.0px;" width="46" height="46" viewBox="0 0 24 24"><path d="M12 2C6.480 2 2 6.480 2 12s4.480 10 10 10 10-4.480 10-10S17.520 2 12 2zm3.400 14H8.600a.600.600 0 0 1-.600-.600V8.600a.600.600 0 0 1 .600-.600h6.800a.600.600 0 0 1 .600.600v6.800a.600.600 0 0 1-.600.600z" fill="#616161"/></svg>
<svg style="left:12px;top:535.5px;" width="40" height="40" viewBox="0 0 24 24"><path d="M23.546 10.930L13.067.452a1.550 1.550 0 0 0-2.188 0L8.708 2.627l2.760 2.760a1.838 1.838 0 0 1 2.327 2.341l2.658 2.660a1.838 1.838 0 0 1 1.900 3.039 1.837 1.837 0 0 1-2.600 0 1.846 1.846 0 0 1-.404-1.996L12.860 8.955v6.525c.176.086.342.203.488.348a1.848 1.848 0 0 1 0 2.600 1.844 1.844 0 0 1-2.609 0 1.834 1.834 0 0 1 0-2.598c.182-.180.387-.316.605-.406V8.835a1.834 1.834 0 0 1-.996-2.410L7.636 3.700.450 10.881c-.600.605-.600 1.584 0 2.189l10.480 10.477a1.545 1.545 0 0 0 2.186 0l10.430-10.430a1.544 1.544 0 0 0 0-2.187" fill="#616161"/></svg>
<svg style="left:16px;top:650px;" width="31" height="25" viewBox="0 0 31 25"><circle cx="2.600" cy="2.6" r="2.500" fill="#616161"/><rect x="8" y="0.9000000000000001" width="23" height="3.400" fill="#616161"/><circle cx="2.600" cy="12.4" r="2.500" fill="#616161"/><rect x="8" y="10.700000000000001" width="23" height="3.400" fill="#616161"/><circle cx="2.600" cy="22.2" r="2.500" fill="#616161"/><rect x="8" y="20.5" width="23" height="3.400" fill="#616161"/></svg>
<svg style="left:12.05px;top:747.25px;" width="40.5" height="40.5" viewBox="0 0 24 24"><path d="M20.500 11H19V7c0-1.100-.900-2-2-2h-4V3.500C13 2.120 11.880 1 10.500 1S8 2.120 8 3.500V5H4c-1.100 0-1.990.900-1.990 2v3.800H3.500c1.490 0 2.700 1.210 2.700 2.700s-1.210 2.700-2.700 2.700H2V20c0 1.100.900 2 2 2h3.800v-1.500c0-1.490 1.210-2.700 2.700-2.700 1.490 0 2.700 1.210 2.700 2.700V22H17c1.100 0 2-.900 2-2v-4h1.500c1.380 0 2.500-1.120 2.500-2.500S21.880 11 20.500 11z" fill="#616161"/></svg>
<svg style="left:2973px;top:324px;" width="40" height="40" viewBox="0 0 40 40"><path d="M19.140 12.940c.040-.300.060-.610.060-.940 0-.320-.020-.640-.070-.940l2.030-1.580c.180-.140.230-.410.120-.610l-1.920-3.320c-.120-.220-.370-.290-.590-.220l-2.390.960c-.500-.380-1.030-.700-1.620-.940l-.360-2.540c-.040-.240-.240-.410-.480-.410h-3.840c-.240 0-.430.170-.470.410l-.360 2.540c-.590.240-1.130.570-1.620.940l-2.390-.960c-.220-.080-.470 0-.590.220L2.740 8.870c-.120.210-.080.470.120.610l2.030 1.580c-.050.300-.090.630-.090.940s.020.640.070.940l-2.030 1.580c-.180.140-.230.410-.120.610l1.920 3.320c.120.220.370.290.590.220l2.390-.960c.500.380 1.030.700 1.620.940l.360 2.540c.050.240.240.410.480.410h3.840c.240 0 .440-.170.470-.410l.360-2.540c.590-.240 1.130-.560 1.620-.940l2.390.960c.220.080.470 0 .590-.220l1.920-3.320c.120-.220.070-.470-.120-.610l-2.010-1.580zM12 15.600c-1.980 0-3.600-1.620-3.600-3.600s1.620-3.600 3.600-3.600 3.600 1.620 3.600 3.600-1.620 3.600-3.600 3.600z" fill="#616161" transform="translate(12.500,11) scale(1.150)"/><path d="M19.140 12.940c.040-.300.060-.610.060-.940 0-.320-.020-.640-.070-.940l2.030-1.580c.180-.140.230-.410.120-.610l-1.920-3.320c-.120-.220-.370-.290-.590-.220l-2.390.960c-.500-.380-1.030-.700-1.620-.940l-.360-2.540c-.040-.240-.240-.410-.480-.410h-3.840c-.240 0-.430.170-.470.410l-.360 2.540c-.590.240-1.130.570-1.620.940l-2.390-.960c-.220-.080-.470 0-.590.220L2.740 8.870c-.120.210-.080.470.120.610l2.030 1.580c-.050.300-.090.630-.090.940s.020.640.070.940l-2.030 1.580c-.180.140-.230.410-.120.610l1.920 3.320c.120.220.370.290.590.220l2.390-.960c.500.380 1.030.700 1.620.940l.360 2.540c.050.240.240.410.480.410h3.840c.240 0 .440-.170.470-.410l.360-2.540c.590-.240 1.130-.560 1.620-.940l2.390.960c.220.080.470 0 .590-.220l1.920-3.320c.120-.220.070-.470-.120-.610l-2.010-1.580zM12 15.600c-1.980 0-3.600-1.620-3.600-3.600s1.620-3.600 3.600-3.600 3.600 1.620 3.600 3.600-1.620 3.600-3.600 3.600z" fill="#616161" transform="translate(0,0) scale(0.700)"/></svg>
<svg style="left:2972.0px;top:430.0px;" width="40" height="40" viewBox="0 0 24 24"><path d="M20 8h-2.810c-.450-.780-1.070-1.450-1.820-1.960L17 4.410 15.590 3l-2.170 2.170C12.960 5.060 12.490 5 12 5c-.490 0-.960.060-1.410.170L8.410 3 7 4.410l1.620 1.630C7.880 6.550 7.260 7.220 6.810 8H4v2h2.090c-.050.330-.090.660-.090 1v1H4v2h2v1c0 .340.040.670.090 1H4v2h2.810c1.040 1.790 2.970 3 5.190 3s4.150-1.210 5.190-3H20v-2h-2.090c.050-.330.090-.660.090-1v-1h2v-2h-2v-1c0-.340-.040-.670-.090-1H20V8zm-6 8h-4v-2h4v2zm0-4h-4v-2h4v2z" fill="#616161"/></svg>
<div style="left:90px;top:308px;width:144px;height:48px;background:#3874cb;border-radius:3px;"></div>
<svg style="left:152px;top:322px;" width="20" height="20" viewBox="0 0 20 20"><path d="M10 0.500v19M0.500 10h19" stroke="#fff" stroke-width="2.400"/></svg>
<svg style="left:264.4px;top:321px;" width="27" height="21.7" viewBox="2 4 20 16"><path d="M20 6h-8l-2-2H4c-1.110 0-1.990.890-1.990 2L2 18c0 1.110.890 2 2 2h16c1.110 0 2-.890 2-2V8c0-1.110-.890-2-2-2zm-1 8h-3v3h-2v-3h-3v-2h3V9h2v3h3v2z" fill="#616161"/></svg>
<svg style="left:352.5px;top:320.5px;" width="19" height="23" viewBox="5 3 14 17"><path d="M9 16h6v-6h4l-7-7-7 7h4zm-4 2h14v2H5z" fill="#616161"/></svg>
<svg style="left:435px;top:321.5px;" width="22" height="22" viewBox="4 4 16 16"><path d="M17.650 6.350C16.200 4.900 14.210 4 12 4c-4.420 0-7.990 3.580-7.990 8s3.570 8 7.990 8c3.730 0 6.840-2.550 7.730-6h-2.080c-.820 2.330-3.040 4-5.650 4-3.310 0-6-2.690-6-6s2.690-6 6-6c1.660 0 3.140.690 4.220 1.780L13 11h7V4l-2.350 2.350z" fill="#616161"/></svg>
<svg style="left:515px;top:319px;" width="30" height="30" viewBox="0 0 28 28"><path d="M23.546 10.930L13.067.452a1.550 1.550 0 0 0-2.188 0L8.708 2.627l2.760 2.760a1.838 1.838 0 0 1 2.327 2.341l2.658 2.660a1.838 1.838 0 0 1 1.900 3.039 1.837 1.837 0 0 1-2.600 0 1.846 1.846 0 0 1-.404-1.996L12.860 8.955v6.525c.176.086.342.203.488.348a1.848 1.848 0 0 1 0 2.600 1.844 1.844 0 0 1-2.609 0 1.834 1.834 0 0 1 0-2.598c.182-.180.387-.316.605-.406V8.835a1.834 1.834 0 0 1-.996-2.410L7.636 3.700.450 10.881c-.600.605-.600 1.584 0 2.189l10.480 10.477a1.545 1.545 0 0 0 2.186 0l10.430-10.430a1.544 1.544 0 0 0 0-2.187" fill="#c9c9c9" transform="translate(0,4.500) scale(0.950)"/><path d="M22 1v8M18 5h8" stroke="#c9c9c9" stroke-width="1.600"/></svg>
<div style="left:90px;top:382px;width:427px;height:59px;background:#fff;border:2px solid #7b7b7b;box-sizing:border-box;"></div>
<span id="t40" class="t" style="top:397.31px;font-size:26.5px;line-height:34px;color:#8c8c8c;left:110px;letter-spacing:1.085px;">Filter files by name</span>
<svg style="left:475px;top:399px;" width="26" height="26" viewBox="3 3 17.500 17.500"><path d="M15.500 14h-.790l-.280-.270C15.410 12.590 16 11.110 16 9.500 16 5.910 13.090 3 9.500 3S3 5.910 3 9.500 5.910 16 9.500 16c1.610 0 3.090-.590 4.230-1.570l.270.280v.790l5 4.990L20.490 19l-4.990-5zm-6 0C7.010 14 5 11.990 5 9.500S7.010 5 9.500 5 14 7.010 14 9.500 11.990 14 9.500 14z" fill="#616161"/></svg>
<svg style="left:97px;top:463px;" width="26.5" height="21.2" viewBox="2 4 20 16"><path d="M10 4H4c-1.100 0-1.990.900-1.990 2L2 18c0 1.100.900 2 2 2h16c1.100 0 2-.900 2-2V8c0-1.100-.900-2-2-2h-8l-2-2z" fill="#616161"/></svg>
<span id="t41" class="t" style="top:455.81px;font-size:26.5px;line-height:34px;color:#212121;left:133px;letter-spacing:0.769px;">/ cyverse-utils /</span>
<div style="left:66px;top:509px;width:738px;height:2px;background:#e0e0e0;"></div>
<span id="t42" class="t" style="top:518.81px;font-size:26.5px;line-height:34px;color:#212121;left:90px;font-weight:700;letter-spacing:0.271px;-webkit-text-stroke:0;">Name</span>
<svg style="left:477.5px;top:531px;" width="17.5" height="9" viewBox="0 0 17.5 9"><path d="M0 9L8.750 0l8.750 9z" fill="#616161"/></svg>
<div style="left:530px;top:514px;width:2px;height:43px;background:#e0e0e0;"></div>
<span id="t43" class="t" style="top:519.31px;font-size:26.5px;line-height:34px;color:#212121;right:2243.14px;letter-spacing:0.865px;">Last Modified</span>
<div style="left:66px;top:559px;width:738px;height:2px;background:#c8c8c8;"></div>
<div style="left:66px;top:561px;width:738px;height:48px;background:#3874cb;"></div>
<div style="left:75px;top:578.5px;width:13px;height:13px;background:#fff;border-radius:50%;"></div>
<svg style="left:96.5px;top:573px;" width="27" height="27" viewBox="1.800 1.800 18.400 18.400"><path d="M18.700 3.300v15.400H3.300V3.300h15.400m1.500-1.500H1.800v18.300h18.300l.100-18.300z" fill="#fff"/><path d="M16.500 16.500l-5.400-4.300-5.600 4.300v-11h11z" fill="#fff"/></svg>
<span id="t44" class="t" style="top:568.31px;font-size:26.5px;line-height:34px;color:#fff;left:138px;letter-spacing:0.422px;">create_github_keypair.ipynb</span>
<span id="t45" class="t" style="top:568.31px;font-size:26.5px;line-height:34px;color:#fff;right:2243.47px;letter-spacing:0.529px;">46 seconds ago</span>
<span id="t46" class="t" style="top:611.71px;font-size:34px;line-height:44px;color:#3d86d8;left:98px;font-weight:700;transform:scaleX(.84);transform-origin:left;">R</span>
<span id="t47" class="t" style="top:616.31px;font-size:26.5px;line-height:34px;color:#212121;left:138px;letter-spacing:0.237px;">create_github_keypair.R</span>
<span id="t48" class="t" style="top:616.31px;font-size:26.5px;line-height:34px;color:#212121;right:2244.02px;letter-spacing:-0.019px;">11 minutes ago</span>
<div style="left:820px;top:304px;width:429px;height:48px;background:#eeeeee;"></div>
<div style="left:820px;top:352px;width:2126px;height:2px;background:#b4b4b4;"></div>
<svg style="left:836.0px;top:316.5px;" width="28" height="28" viewBox="0 0 24 24"><path d="M19 19H5V5h7V3H5c-1.110 0-2 .900-2 2v14c0 1.100.890 2 2 2h14c1.100 0 2-.900 2-2v-7h-2v7zM14 3v2h3.590l-9.830 9.830 1.410 1.410L19 6.410V10h2V3h-7z" fill="#616161"/></svg>
<span id="t49" class="t" style="top:313.11px;font-size:26.5px;line-height:34px;color:#212121;left:872px;letter-spacing:0.355px;">Launcher</span>
<svg style="left:1200.5px;top:314.5px;" width="31" height="31" viewBox="0 0 24 24"><path d="M19 6.410L17.590 5 12 10.590 6.410 5 5 6.410 10.590 12 5 17.590 6.410 19 12 13.410 17.590 19 19 17.590 13.410 12z" fill="#616161"/></svg>
<div style="left:1249px;top:304px;width:429px;height:50px;background:#fff;border-left:2px solid #bdbdbd;border-right:2px solid #bdbdbd;box-sizing:border-box;"></div>
<div style="left:1249px;top:304px;width:429px;height:4px;background:#3874cb;"></div>
<svg style="left:1268px;top:318.5px;" width="23.5" height="23.5" viewBox="1.800 1.800 18.400 18.400"><path d="M18.700 3.300v15.400H3.300V3.300h15.400m1.500-1.500H1.800v18.300h18.300l.100-18.300z" fill="#e57b34"/><path d="M16.500 16.500l-5.400-4.300-5.600 4.300v-11h11z" fill="#e57b34"/></svg>
<div style="left:1300px;top:312px;width:330px;height:40px;overflow:hidden;">
<span id="t50" class="t" style="top:1.11px;font-size:26.5px;line-height:34px;color:#212121;left:2px;letter-spacing:0.422px;">create_github_keypair.ipynb</span>
</div>
<div style="left:1636.5px;top:320.5px;width:19px;height:19px;background:#616161;border-radius:50%;"></div>
<div style="left:1680px;top:304px;width:48px;height:48px;background:#eeeeee;"></div>
<svg style="left:1694px;top:318px;" width="20" height="20" viewBox="0 0 20 20"><path d="M10 0v20M0 10h20" stroke="#616161" stroke-width="2.600"/></svg>
<div style="left:820px;top:354px;width:2126px;height:56px;background:#fff;"></div>
<div style="left:820px;top:410px;width:2126px;height:2px;background:#bdbdbd;box-shadow:0 2px 3px rgba(0,0,0,.18);"></div>
<svg style="left:837.7px;top:366.0px;" width="32" height="32" viewBox="0 0 24 24"><path d="M17 3H5c-1.110 0-2 .900-2 2v14c0 1.100.890 2 2 2h14c1.100 0 2-.900 2-2V7l-4-4zm-5 16c-1.660 0-3-1.340-3-3s1.340-3 3-3 3 1.340 3 3-1.340 3-3 3zm3-10H5V5h10v4z" fill="#616161"/></svg>
<svg style="left:898.0px;top:366.0px;" width="32" height="32" viewBox="0 0 24 24"><path d="M19 13h-6v6h-2v-6H5v-2h6V5h2v6h6v2z" fill="#616161"/></svg>
<svg style="left:958.0px;top:366.0px;" width="32" height="32" viewBox="0 0 24 24"><path d="M9.640 7.640c.230-.500.360-1.050.360-1.640 0-2.210-1.790-4-4-4S2 3.790 2 6s1.790 4 4 4c.590 0 1.140-.130 1.640-.360L10 12l-2.360 2.360C7.140 14.130 6.590 14 6 14c-2.210 0-4 1.790-4 4s1.790 4 4 4 4-1.790 4-4c0-.590-.130-1.140-.360-1.640L12 14l7 7h3v-1L9.640 7.640zM6 8c-1.100 0-2-.890-2-2s.900-2 2-2 2 .890 2 2-.900 2-2 2zm0 12c-1.100 0-2-.890-2-2s.900-2 2-2 2 .890 2 2-.900 2-2 2zm6-7.500c-.280 0-.500-.220-.500-.500s.220-.500.500-.500.500.220.500.500-.220.500-.500.500zM19 3l-6 6 2 2 7-7V3z" fill="#616161"/></svg>
<svg style="left:1017.0px;top:367.0px;" width="32" height="32" viewBox="0 0 24 24"><path d="M16 1H4c-1.100 0-2 .900-2 2v14h2V3h12V1zm3 4H8c-1.100 0-2 .900-2 2v14c0 1.100.900 2 2 2h11c1.100 0 2-.900 2-2V7c0-1.100-.900-2-2-2zm0 16H8V7h11v14z" fill="#616161"/></svg>
<svg style="left:1078.0px;top:365.0px;" width="32" height="32" viewBox="0 0 24 24"><path d="M19 2h-4.180C14.400.840 13.300 0 12 0c-1.300 0-2.400.840-2.820 2H5c-1.100 0-2 .900-2 2v16c0 1.100.900 2 2 2h14c1.100 0 2-.900 2-2V4c0-1.100-.900-2-2-2zm-7 0c.550 0 1 .450 1 1s-.450 1-1 1-1-.450-1-1 .450-1 1-1zm7 18H5V4h2v3h10V4h2v16z" fill="#616161"/></svg>
<svg style="left:1137.0px;top:366.0px;" width="32" height="32" viewBox="0 0 24 24"><path d="M8 5v14l11-7z" fill="#616161"/></svg>
<svg style="left:1197.8px;top:366.0px;" width="32" height="32" viewBox="0 0 24 24"><path d="M6 6h12v12H6z" fill="#616161"/></svg>
<svg style="left:1258.0px;top:366.0px;" width="32" height="32" viewBox="0 0 24 24"><path d="M17.650 6.350C16.200 4.900 14.210 4 12 4c-4.420 0-7.990 3.580-7.990 8s3.570 8 7.990 8c3.730 0 6.840-2.550 7.730-6h-2.080c-.820 2.330-3.040 4-5.650 4-3.310 0-6-2.690-6-6s2.690-6 6-6c1.660 0 3.140.690 4.220 1.780L13 11h7V4l-2.350 2.350z" fill="#616161"/></svg>
<svg style="left:1319.0px;top:366.0px;" width="32" height="32" viewBox="0 0 24 24"><path d="M4 18l8.500-6L4 6v12zm9-12v12l8.500-6L13 6z" fill="#616161"/></svg>
<span id="t51" class="t" style="top:365.81px;font-size:26.5px;line-height:34px;color:#212121;left:1385px;letter-spacing:0.547px;">Code</span>
<svg style="left:1524px;top:377px;" width="20" height="13" viewBox="0 0 20 13"><path d="M1.500 1.500l8.500 9 8.500-9" fill="none" stroke="#616161" stroke-width="2.800"/></svg>
<svg style="left:1579px;top:365px;" width="29" height="29" viewBox="0 0 29 29"><circle cx="14.500" cy="14.500" r="12.400" fill="none" stroke="#111" stroke-width="3"/><path d="M14.500 6.500v8.500l5 4" fill="none" stroke="#111" stroke-width="3"/></svg>
<span id="t52" class="t" style="top:359.89px;font-size:27px;line-height:35px;color:#111;left:1639px;font-weight:700;font-family:'Liberation Serif', serif;">git</span>
<svg style="left:2472px;top:379px;" width="15" height="8" viewBox="0 0 15 8"><path d="M0 0h15l-7.500 8z" fill="#616161"/></svg>
<span id="t53" class="t" style="top:365.81px;font-size:26.5px;line-height:34px;color:#212121;left:2496px;letter-spacing:0.122px;">Open in...</span>
<svg style="left:2647.0px;top:368.0px;" width="30" height="30" viewBox="0 0 24 24"><path d="M20 8h-2.810c-.450-.780-1.070-1.450-1.820-1.960L17 4.410 15.590 3l-2.170 2.170C12.960 5.060 12.490 5 12 5c-.490 0-.960.060-1.410.170L8.410 3 7 4.410l1.620 1.630C7.880 6.550 7.260 7.220 6.810 8H4v2h2.090c-.050.330-.090.660-.090 1v1H4v2h2v1c0 .340.040.670.090 1H4v2h2.810c1.040 1.790 2.970 3 5.190 3s4.150-1.210 5.190-3H20v-2h-2.090c.050-.330.090-.660.090-1v-1h2v-2h-2v-1c0-.340-.040-.670-.090-1H20V8zm-6 8h-4v-2h4v2zm0-4h-4v-2h4v2z" fill="#616161"/></svg>
<span id="t54" class="t" style="top:365.81px;font-size:26.5px;line-height:34px;color:#212121;left:2710px;letter-spacing:0.472px;">macrosystems</span>
<svg style="left:2903px;top:367.5px;" width="30" height="30" viewBox="0 0 30 30"><circle cx="15" cy="15" r="12.800" fill="none" stroke="#616161" stroke-width="2.600"/></svg>
<div style="left:820px;top:412px;width:2126px;height:1324px;overflow:hidden;">
<div style="left:30px;top:-32px;width:16px;height:358px;background:#3874cb;border-radius:4px;"></div>
<div style="left:174px;top:-32px;width:1922px;height:358px;background:#f5f5f5;border:2px solid #e0e0e0;box-sizing:border-box;"></div>
<pre style="left:187.8px;top:27.25px;line-height:36px;">    subprocess.<span style="color:#2459a8">run</span>(<span style="color:#8a8a62">[</span><span style="color:#ba2121">&quot;eval&quot;</span>, <span style="color:#ba2121">&quot;$(ssh-agent -s)&quot;</span>, <span style="color:#ba2121">&quot;&amp;&amp;&quot;</span>, <span style="color:#ba2121">&quot;ssh-add&quot;</span>, private_key_path<span style="color:#8a8a62">]</span>, shell<span style="color:#a033f0;font-weight:700">=</span><span style="color:#3a8a1f;font-weight:700">True</span>)

    add_github_to_known_hosts()

    print(<span style="color:#ba2121">&quot;Public Key:&quot;</span>)
    print(public_key)

configure()</pre>
<div style="left:30px;top:336px;width:16px;height:826px;background:#3874cb;border-radius:4px;"></div>
<pre style="left:189.3px;top:335.70px;line-height:34px;">GitHub username: Ckster
GitHub email: verleyeerick@gmail.com</pre>
<div style="left:174px;top:404px;width:1922px;height:44px;background:#fbdfdf;"></div>
<pre style="left:189.3px;top:414.00px;line-height:34px;">Created directory &#x27;/home/jovyan/.ssh&#x27;.</pre>
<div style="left:189.5px;top:1092.5px;width:1519.7px;height:33px;background:#efc6c6;"></div>
<pre style="left:189.3px;top:448.00px;line-height:34px;">Generating public/private ed25519 key pair.
Your identification has been saved in /home/jovyan/.ssh/github
Your public key has been saved in /home/jovyan/.ssh/github.pub
The key fingerprint is:
SHA256:u0I0vyVcoOOhX3T8588+kjO57f1yYdpHHEWQbWIaBWU jovyan@a54d5556c
The key&#x27;s randomart image is:
+--[ED25519 256]--+
|            .+E=.|
|        .   ..+ +|
|       . o   + o.|
|      * . + .  . |
|     + BSo .   ..|
|    . o =.. . .oo|
|     o ..+   o*..|
|      o ..   B+++|
|       ..    .*BX|
+----[SHA256]-----+
github.com added to known hosts file.
Public Key:
ssh-ed25519 AAAAC3NzaC1lZDI1NTE5AAAAIGI0Y6avxKTDuHrTrGwtQH3qWem5vyyL9hnJMlbW7TF4 jovyan@a54d5556c</pre>
<div style="left:174px;top:1182.3px;width:1922px;height:57.5px;background:#f5f5f5;border:2px solid #e0e0e0;box-sizing:border-box;"></div>
<pre style="left:100.8px;top:1192.00px;line-height:34px;color:#a8a8a8;">[ ]:</pre>
</div>
<span id="t55" class="t" style="top:1756.11px;font-size:26.5px;line-height:34px;color:#212121;left:56px;">Simple</span>
<div style="left:148px;top:1755px;width:70px;height:32px;background:#b6b6b6;border-radius:16px;"></div>
<div style="left:153.5px;top:1760.5px;width:21px;height:21px;background:#f2f2f2;border-radius:50%;"></div>
<span id="t56" class="t" style="top:1756.11px;font-size:26.5px;line-height:34px;color:#212121;left:270px;">0</span>
<div style="left:309px;top:1761px;width:30px;height:30px;background:#3a3a3a;"></div>
<span id="t57" class="t" style="top:1765.77px;font-size:18px;line-height:23px;color:#fff;left:313px;font-weight:700;font-family:'DejaVu Sans Mono', 'Liberation Mono', monospace;">$_</span>
<span id="t58" class="t" style="top:1756.11px;font-size:26.5px;line-height:34px;color:#212121;left:357px;">1</span>
<svg style="left:393px;top:1760px;" width="27" height="27" viewBox="0 0 27 27"><rect x="5.500" y="5.500" width="16" height="16" rx="2.500" fill="none" stroke="#4a4a4a" stroke-width="2.600"/><rect x="10" y="10" width="7" height="7" fill="none" stroke="#4a4a4a" stroke-width="2.200"/><path d="M9.5 0.500v4M9.5 22.500v4M0.500 9.5h4M22.500 9.5h4" stroke="#4a4a4a" stroke-width="2.200"/><path d="M13.5 0.500v4M13.5 22.500v4M0.500 13.5h4M22.500 13.5h4" stroke="#4a4a4a" stroke-width="2.200"/><path d="M17.5 0.500v4M17.5 22.500v4M0.500 17.5h4M22.500 17.5h4" stroke="#4a4a4a" stroke-width="2.200"/></svg>
<svg style="left:470px;top:1756.5px;" width="31.5" height="31.5" viewBox="0 0 24 24"><path d="M23.546 10.930L13.067.452a1.550 1.550 0 0 0-2.188 0L8.708 2.627l2.760 2.760a1.838 1.838 0 0 1 2.327 2.341l2.658 2.660a1.838 1.838 0 0 1 1.900 3.039 1.837 1.837 0 0 1-2.600 0 1.846 1.846 0 0 1-.404-1.996L12.860 8.955v6.525c.176.086.342.203.488.348a1.848 1.848 0 0 1 0 2.600 1.844 1.844 0 0 1-2.609 0 1.834 1.834 0 0 1 0-2.598c.182-.180.387-.316.605-.406V8.835a1.834 1.834 0 0 1-.996-2.410L7.636 3.700.450 10.881c-.600.605-.600 1.584 0 2.189l10.480 10.477a1.545 1.545 0 0 0 2.186 0l10.430-10.430a1.544 1.544 0 0 0 0-2.187" fill="#4a4a4a"/></svg>
<span id="t59" class="t" style="top:1756.11px;font-size:26.5px;line-height:34px;color:#212121;left:513px;letter-spacing:0.516px;">main</span>
<span id="t60" class="t" style="top:1756.11px;font-size:26.5px;line-height:34px;color:#212121;left:603px;letter-spacing:0.326px;">macrosystems | Idle</span>
<span id="t61" class="t" style="top:1756.11px;font-size:26.5px;line-height:34px;color:#212121;left:2073px;letter-spacing:0.311px;">Mode: Command</span>
<svg style="left:2316px;top:1757px;" width="31" height="29" viewBox="0 0 31 29"><path d="M15.500 1.500L3 6.500v8c0 6.500 5 11 12.500 13 7.500-2 12.500-6.500 12.500-13v-8z" fill="none" stroke="#4a4a4a" stroke-width="2.400" stroke-linejoin="round"/><path d="M9.500 14.500l4.200 4.200 8-8.200" fill="none" stroke="#4a4a4a" stroke-width="2.600"/></svg>
<span id="t62" class="t" style="top:1756.11px;font-size:26.5px;line-height:34px;color:#212121;left:2383px;letter-spacing:-0.117px;">Ln 4, Col 1</span>
<span id="t63" class="t" style="top:1756.11px;font-size:26.5px;line-height:34px;color:#212121;left:2542px;letter-spacing:0.461px;">create_github_keypair.ipynb</span>
<span id="t64" class="t" style="top:1756.11px;font-size:26.5px;line-height:34px;color:#212121;left:2915px;">2</span>
<svg style="left:2951px;top:1756px;" width="34" height="36" viewBox="0 0 34 36"><path d="M1.500 29.800h31" stroke="#4a4a4a" stroke-width="3"/><path d="M5.500 29.500C8.500 23 9 18 9 12.500C9 6 12.500 2 17 2s8 4 8 10.500c0 5.500.500 10.500 3.500 17" fill="none" stroke="#4a4a4a" stroke-width="3"/><path d="M13.300 31a3.800 3.800 0 0 0 7.400 0" fill="none" stroke="#4a4a4a" stroke-width="2.600"/></svg>
<div style="left:0px;top:1704px;width:3023px;height:92px;background:linear-gradient(180deg,rgba(0,0,0,0) 0%,rgba(0,0,0,.035) 45%,rgba(0,0,0,.105) 100%);border-radius:0 0 20px 20px;pointer-events:none;"></div>
<div style="left:118px;top:1798px;width:2788px;height:155px;background:rgba(30,30,30,.96);border-radius:38px;border:2px solid #3c3c3c;box-sizing:border-box;box-shadow:0 0 0 1px #000;"></div>
<div style="left:139px;top:1820px;width:101px;height:101px;border-radius:23px;overflow:hidden;background:linear-gradient(180deg,#5cc4f8 0%,#3f8ff0 55%,#3a6fe6 100%);"><svg style="left:0;top:0" width="101" height="101" viewBox="0 0 101 101"><path d="M55 0C47 18 43 40 42.500 59H57c1 14 3 28 6 42h38V0z" fill="#e6e9ef"/><path d="M55 0C47 18 43 40 42.500 59H57c1 14 3 28 6 42" fill="none" stroke="#1d2a3a" stroke-width="0"/><path d="M20 68c18 16 44 16 62 0" fill="none" stroke="#1f2b38" stroke-width="3.600" stroke-linecap="round"/><rect x="24.500" y="29" width="4" height="11" rx="2" fill="#1f2b38"/><rect x="72.500" y="29" width="4" height="11" rx="2" fill="#1f2b38"/><path d="M56.500 0C48.500 18 44.500 40 44 57.500h12" fill="none" stroke="#2b5fc4" stroke-width="0"/></svg></div>
<div style="left:272px;top:1820px;width:101px;height:101px;background:linear-gradient(180deg,#c3c3c3,#adadad);border-radius:23px;"></div>
<div style="left:289px;top:1837px;width:18px;height:18px;background:#6fdc5a;border-radius:4.500px;"></div>
<div style="left:314px;top:1837px;width:18px;height:18px;background:#f5c63a;border-radius:4.500px;"></div>
<div style="left:339px;top:1837px;width:18px;height:18px;background:#f0953a;border-radius:4.500px;"></div>
<div style="left:289px;top:1862px;width:18px;height:18px;background:#d8362a;border-radius:4.500px;"></div>
<div style="left:314px;top:1862px;width:18px;height:18px;background:#b4bcc4;border-radius:4.500px;"></div>
<div style="left:339px;top:1862px;width:18px;height:18px;background:#ec4a63;border-radius:4.500px;"></div>
<div style="left:289px;top:1887px;width:18px;height:18px;background:#a055e0;border-radius:4.500px;"></div>
<div style="left:314px;top:1887px;width:18px;height:18px;background:#3b93f2;border-radius:4.500px;"></div>
<div style="left:339px;top:1887px;width:18px;height:18px;background:#5fd0b4;border-radius:4.500px;"></div>
<div style="left:405px;top:1820px;width:101px;height:101px;background:linear-gradient(180deg,#fdfdfd,#e9e9e9);border-radius:23px;"></div>
<svg style="left:405px;top:1820px;" width="101" height="101" viewBox="0 0 101 101"><defs><linearGradient id="sf" x1="0" y1="0" x2="0" y2="1"><stop offset="0" stop-color="#2fb4f6"/><stop offset="1" stop-color="#2073e4"/></linearGradient></defs><circle cx="50.500" cy="50.500" r="43.500" fill="url(#sf)"/><path d="M50.500 10v9" stroke="#fff" stroke-width="1.300" transform="rotate(0 50.500 50.500)"/><path d="M50.500 10v6" stroke="#fff" stroke-width="1.300" transform="rotate(10 50.500 50.500)"/><path d="M50.500 10v9" stroke="#fff" stroke-width="1.300" transform="rotate(20 50.500 50.500)"/><path d="M50.500 10v6" stroke="#fff" stroke-width="1.300" transform="rotate(30 50.500 50.500)"/><path d="M50.500 10v9" stroke="#fff" stroke-width="1.300" transform="rotate(40 50.500 50.500)"/><path d="M50.500 10v6" stroke="#fff" stroke-width="1.300" transform="rotate(50 50.500 50.500)"/><path d="M50.500 10v9" stroke="#fff" stroke-width="1.300" transform="rotate(60 50.500 50.500)"/><path d="M50.500 10v6" stroke="#fff" stroke-width="1.300" transform="rotate(70 50.500 50.500)"/><path d="M50.500 10v9" stroke="#fff" stroke-width="1.300" transform="rotate(80 50.500 50.500)"/><path d="M50.500 10v6" stroke="#fff" stroke-width="1.300" transform="rotate(90 50.500 50.500)"/><path d="M50.500 10v9" stroke="#fff" stroke-width="1.300" transform="rotate(100 50.500 50.500)"/><path d="M50.500 10v6" stroke="#fff" stroke-width="1.300" transform="rotate(110 50.500 50.500)"/><path d="M50.500 10v9" stroke="#fff" stroke-width="1.300" transform="rotate(120 50.500 50.500)"/><path d="M50.500 10v6" stroke="#fff" stroke-width="1.300" transform="rotate(130 50.500 50.500)"/><path d="M50.500 10v9" stroke="#fff" stroke-width="1.300" transform="rotate(140 50.500 50.500)"/><path d="M50.500 10v6" stroke="#fff" stroke-width="1.300" transform="rotate(150 50.500 50.500)"/><path d="M50.500 10v9" stroke="#fff" stroke-width="1.300" transform="rotate(160 50.500 50.500)"/><path d="M50.500 10v6" stroke="#fff" stroke-width="1.300" transform="rotate(170 50.500 50.500)"/><path d="M50.500 10v9" stroke="#fff" stroke-width="1.300" transform="rotate(180 50.500 50.500)"/><path d="M50.500 10v6" stroke="#fff" stroke-width="1.300" transform="rotate(190 50.500 50.500)"/><path d="M50.500 10v9" stroke="#fff" stroke-width="1.300" transform="rotate(200 50.500 50.500)"/><path d="M50.500 10v6" stroke="#fff" stroke-width="1.300" transform="rotate(210 50.500 50.500)"/><path d="M50.500 10v9" stroke="#fff" stroke-width="1.300" transform="rotate(220 50.500 50.500)"/><path d="M50.500 10v6" stroke="#fff" stroke-width="1.300" transform="rotate(230 50.500 50.500)"/><path d="M50.500 10v9" stroke="#fff" stroke-width="1.300" transform="rotate(240 50.500 50.500)"/><path d="M50.500 10v6" stroke="#fff" stroke-width="1.300" transform="rotate(250 50.500 50.500)"/><path d="M50.500 10v9" stroke="#fff" stroke-width="1.300" transform="rotate(260 50.500 50.500)"/><path d="M50.500 10v6" stroke="#fff" stroke-width="1.300" transform="rotate(270 50.500 50.500)"/><path d="M50.500 10v9" stroke="#fff" stroke-width="1.300" transform="rotate(280 50.500 50.500)"/><path d="M50.500 10v6" stroke="#fff" stroke-width="1.300" transform="rotate(290 50.500 50.500)"/><path d="M50.500 10v9" stroke="#fff" stroke-width="1.300" transform="rotate(300 50.500 50.500)"/><path d="M50.500 10v6" stroke="#fff" stroke-width="1.300" transform="rotate(310 50.500 50.500)"/><path d="M50.500 10v9" stroke="#fff" stroke-width="1.300" transform="rotate(320 50.500 50.500)"/><path d="M50.500 10v6" stroke="#fff" stroke-width="1.300" transform="rotate(330 50.500 50.500)"/><path d="M50.500 10v9" stroke="#fff" stroke-width="1.300" transform="rotate(340 50.500 50.500)"/><path d="M50.500 10v6" stroke="#fff" stroke-width="1.300" transform="rotate(350 50.500 50.500)"/><path d="M82 19L46.500 46.500l8 8z" fill="#f2453a"/><path d="M19 82l35.500-27.500-8-8z" fill="#f4f4f4"/></svg>
<svg style="left:532px;top:1811px;" width="111" height="116" viewBox="0 0 111 116"><defs><radialGradient id="ff1" cx="78%" cy="22%" r="95%"><stop offset="0" stop-color="#fff36b"/><stop offset=".3" stop-color="#ffbd2e"/><stop offset=".55" stop-color="#ff7a1e"/><stop offset=".8" stop-color="#f5365c"/><stop offset="1" stop-color="#d11f9a"/></radialGradient><radialGradient id="ff2" cx="50%" cy="35%" r="65%"><stop offset="0" stop-color="#a45cff"/><stop offset="1" stop-color="#4a2bc8"/></radialGradient><clipPath id="ffc"><path d="M66 0c8 10 9 20 5 28 4-2 9-1 12 3 10 6 18 17 22 30 3 4 5 14 4 22-3 20-24 33-51 33C27 116 1 96 1 64c0-11 4-21 10-29 0 5 1 9 4 11 1-9 6-17 14-22-1 5 0 9 3 11 3-5 8-9 14-10 8-3 16-12 20-25z"/></clipPath></defs><path d="M66 0c8 10 9 20 5 28 4-2 9-1 12 3 10 6 18 17 22 30 3 4 5 14 4 22-3 20-24 33-51 33C27 116 1 96 1 64c0-11 4-21 10-29 0 5 1 9 4 11 1-9 6-17 14-22-1 5 0 9 3 11 3-5 8-9 14-10 8-3 16-12 20-25z" fill="url(#ff1)"/><circle cx="56" cy="66" r="28" fill="url(#ff2)"/><path d="M22 46c10-10 28-9 38 0-8-1-13 3-15 9-9 1-17-3-23-9z" fill="#ff9a2a"/><path d="M60 46c8 2 13 8 14 14-4-5-10-7-16-6 0-3 1-6 2-8z" fill="#ffb43a"/><path d="M83 31c6 8 9 18 8 28-1 14-10 26-24 32 18-2 34-14 38-30 2-10-2-22-10-30-4-2-8-2-12 0z" fill="#ffd23a" opacity=".5" clip-path="url(#ffc)"/></svg>
<div style="left:671px;top:1820px;width:101px;height:101px;background:#000;border-radius:23px;border:3px solid #b9c3cc;box-sizing:border-box;"></div>
<div style="left:681px;top:1830px;width:81px;height:81px;background:#222;border-radius:15px;"></div>
<span id="t65" class="t" style="top:1832.01px;font-size:26px;line-height:34px;color:#f0f0f0;left:688px;font-weight:700;font-family:'DejaVu Sans Mono', 'Liberation Mono', monospace;">&gt;_</span>
<div style="left:804px;top:1820px;width:101px;height:101px;background:linear-gradient(180deg,#fff,#f0f0f0);border-radius:23px;"></div>
<svg style="left:804px;top:1820px;" width="101" height="101" viewBox="0 0 101 101"><circle cx="50.500" cy="50.500" r="43" fill="#fbc02d"/><path d="M50.500 50.500L13.300 29A43 43 0 0 1 87.700 29z" fill="#e0483b"/><path d="M50.500 50.500L13.300 29A43 43 0 0 0 46 93.300L68 59z" fill="#4caf50" transform="rotate(0)"/><path d="M13.300 29A43 43 0 0 0 50.500 93.500L69 61 50.500 50.500z" fill="#4caf50"/><path d="M87.700 29H50.500l18.500 32L50.500 93.500A43 43 0 0 0 87.700 29z" fill="#fbc02d"/><circle cx="50.500" cy="50.500" r="20.500" fill="#fff"/><circle cx="50.500" cy="50.500" r="16.500" fill="#4a8af4"/></svg>
<div style="left:937px;top:1820px;width:101px;height:101px;background:linear-gradient(180deg,#fff,#f1f1f1);border-radius:23px;"></div>
<div style="left:974px;top:1836px;width:46px;height:68px;background:#21a366;border-radius:4px;background:linear-gradient(180deg,#4cb483 0 25%,#2f9f6b 25% 50%,#1f7f50 50% 75%,#176640 75% 100%);"></div>
<div style="left:997px;top:1836px;width:23px;height:17px;background:#6cc799;border-radius:0 4px 0 0;"></div>
<div style="left:997px;top:1853px;width:23px;height:17px;background:#3fae79;"></div>
<div style="left:947px;top:1851px;width:38px;height:38px;background:#1e7145;border-radius:4px;box-shadow:1px 1px 3px rgba(0,0,0,.3);"></div>
<span id="t66" class="t" style="top:1850.10px;font-size:30px;line-height:39px;color:#fff;left:955px;font-weight:700;">X</span>
<div style="left:1070px;top:1820px;width:101px;height:101px;background:linear-gradient(180deg,#fff,#f1f1f1);border-radius:23px;"></div>
<div style="left:1106px;top:1836px;width:47px;height:66px;background:#1a6fd0;border-radius:4px;background:linear-gradient(180deg,#1f5fb4 0 12%,#2b7fe0 12% 36%,#3b96ec 36% 60%,#2a9be8 60% 100%);"></div>
<div style="left:1130px;top:1844px;width:23px;height:16px;background:#6fd6fb;"></div>
<div style="left:1130px;top:1860px;width:23px;height:16px;background:#4fb4f2;"></div>
<div style="left:1096px;top:1876px;width:57px;height:27px;background:#2a9be8;border-radius:0 0 4px 4px;"></div>
<div style="left:1079px;top:1851px;width:38px;height:38px;background:#1a66c8;border-radius:4px;box-shadow:1px 1px 3px rgba(0,0,0,.3);"></div>
<span id="t67" class="t" style="top:1850.10px;font-size:30px;line-height:39px;color:#fff;left:1086px;font-weight:700;">O</span>
<div style="left:1203px;top:1820px;width:101px;height:101px;background:linear-gradient(180deg,#fff,#f1f1f1);border-radius:23px;"></div>
<svg style="left:1203px;top:1820px;" width="101" height="101" viewBox="0 0 101 101"><circle cx="55" cy="50" r="34" fill="#d6532f"/><path d="M55 16a34 34 0 0 1 34 34H55z" fill="#f0957a"/><path d="M55 16a34 34 0 0 0-34 34h34z" fill="#e4704c"/></svg>
<div style="left:1213px;top:1851px;width:38px;height:38px;background:#c2432a;border-radius:4px;box-shadow:1px 1px 3px rgba(0,0,0,.3);"></div>
<span id="t68" class="t" style="top:1850.10px;font-size:30px;line-height:39px;color:#fff;left:1221px;font-weight:700;">P</span>
<div style="left:1336px;top:1820px;width:101px;height:101px;background:linear-gradient(180deg,#d6d8da,#8d9094);border-radius:23px;"></div>
<svg style="left:1336px;top:1820px;" width="101" height="101" viewBox="0 0 101 101"><circle cx="50.500" cy="50.500" r="44" fill="#9a9da1"/><circle cx="50.500" cy="50.500" r="44" fill="none" stroke="#55585b" stroke-width="2"/><rect x="48.500" y="7" width="4" height="9" fill="#3d3f42" transform="rotate(0 50.500 50.500)"/><rect x="48.500" y="7" width="4" height="9" fill="#3d3f42" transform="rotate(9 50.500 50.500)"/><rect x="48.500" y="7" width="4" height="9" fill="#3d3f42" transform="rotate(18 50.500 50.500)"/><rect x="48.500" y="7" width="4" height="9" fill="#3d3f42" transform="rotate(27 50.500 50.500)"/><rect x="48.500" y="7" width="4" height="9" fill="#3d3f42" transform="rotate(36 50.500 50.500)"/><rect x="48.500" y="7" width="4" height="9" fill="#3d3f42" transform="rotate(45 50.500 50.500)"/><rect x="48.500" y="7" width="4" height="9" fill="#3d3f42" transform="rotate(54 50.500 50.500)"/><rect x="48.500" y="7" width="4" height="9" fill="#3d3f42" transform="rotate(63 50.500 50.500)"/><rect x="48.500" y="7" width="4" height="9" fill="#3d3f42" transform="rotate(72 50.500 50.500)"/><rect x="48.500" y="7" width="4" height="9" fill="#3d3f42" transform="rotate(81 50.500 50.500)"/><rect x="48.500" y="7" width="4" height="9" fill="#3d3f42" transform="rotate(90 50.500 50.500)"/><rect x="48.500" y="7" width="4" height="9" fill="#3d3f42" transform="rotate(99 50.500 50.500)"/><rect x="48.500" y="7" width="4" height="9" fill="#3d3f42" transform="rotate(108 50.500 50.500)"/><rect x="48.500" y="7" width="4" height="9" fill="#3d3f42" transform="rotate(117 50.500 50.500)"/><rect x="48.500" y="7" width="4" height="9" fill="#3d3f42" transform="rotate(126 50.500 50.500)"/><rect x="48.500" y="7" width="4" height="9" fill="#3d3f42" transform="rotate(135 50.500 50.500)"/><rect x="48.500" y="7" width="4" height="9" fill="#3d3f42" transform="rotate(144 50.500 50.500)"/><rect x="48.500" y="7" width="4" height="9" fill="#3d3f42" transform="rotate(153 50.500 50.500)"/><rect x="48.500" y="7" width="4" height="9" fill="#3d3f42" transform="rotate(162 50.500 50.500)"/><rect x="48.500" y="7" width="4" height="9" fill="#3d3f42" transform="rotate(171 50.500 50.500)"/><rect x="48.500" y="7" width="4" height="9" fill="#3d3f42" transform="rotate(180 50.500 50.500)"/><rect x="48.500" y="7" width="4" height="9" fill="#3d3f42" transform="rotate(189 50.500 50.500)"/><rect x="48.500" y="7" width="4" height="9" fill="#3d3f42" transform="rotate(198 50.500 50.500)"/><rect x="48.500" y="7" width="4" height="9" fill="#3d3f42" transform="rotate(207 50.500 50.500)"/><rect x="48.500" y="7" width="4" height="9" fill="#3d3f42" transform="rotate(216 50.500 50.500)"/><rect x="48.500" y="7" width="4" height="9" fill="#3d3f42" transform="rotate(225 50.500 50.500)"/><rect x="48.500" y="7" width="4" height="9" fill="#3d3f42" transform="rotate(234 50.500 50.500)"/><rect x="48.500" y="7" width="4" height="9" fill="#3d3f42" transform="rotate(243 50.500 50.500)"/><rect x="48.500" y="7" width="4" height="9" fill="#3d3f42" transform="rotate(252 50.500 50.500)"/><rect x="48.500" y="7" width="4" height="9" fill="#3d3f42" transform="rotate(261 50.500 50.500)"/><rect x="48.500" y="7" width="4" height="9" fill="#3d3f42" transform="rotate(270 50.500 50.500)"/><rect x="48.500" y="7" width="4" height="9" fill="#3d3f42" transform="rotate(279 50.500 50.500)"/><rect x="48.500" y="7" width="4" height="9" fill="#3d3f42" transform="rotate(288 50.500 50.500)"/><rect x="48.500" y="7" width="4" height="9" fill="#3d3f42" transform="rotate(297 50.500 50.500)"/><rect x="48.500" y="7" width="4" height="9" fill="#3d3f42" transform="rotate(306 50.500 50.500)"/><rect x="48.500" y="7" width="4" height="9" fill="#3d3f42" transform="rotate(315 50.500 50.500)"/><rect x="48.500" y="7" width="4" height="9" fill="#3d3f42" transform="rotate(324 50.500 50.500)"/><rect x="48.500" y="7" width="4" height="9" fill="#3d3f42" transform="rotate(333 50.500 50.500)"/><rect x="48.500" y="7" width="4" height="9" fill="#3d3f42" transform="rotate(342 50.500 50.500)"/><rect x="48.500" y="7" width="4" height="9" fill="#3d3f42" transform="rotate(351 50.500 50.500)"/><circle cx="50.500" cy="50.500" r="33" fill="#7f8286" stroke="#3d3f42" stroke-width="3"/><circle cx="50.500" cy="50.500" r="27" fill="#b4b6b9" stroke="#55585b" stroke-width="2"/><path d="M50.500 50.500V22" stroke="#4a4c4f" stroke-width="4" transform="rotate(0 50.500 50.500)"/><path d="M50.500 50.500V22" stroke="#4a4c4f" stroke-width="4" transform="rotate(120 50.500 50.500)"/><path d="M50.500 50.500V22" stroke="#4a4c4f" stroke-width="4" transform="rotate(240 50.500 50.500)"/><circle cx="50.500" cy="50.500" r="6" fill="#5a5c5f"/></svg>
<div style="left:1405px;top:1808px;width:48px;height:48px;background:#e5483a;border-radius:50%;"></div>
<span id="t69" class="t" style="top:1814.29px;font-size:28px;line-height:36px;color:#fff;left:1422px;">1</span>
<div style="left:1469px;top:1820px;width:101px;height:101px;background:linear-gradient(180deg,#fff,#f1f1f1);border-radius:23px;"></div>
<div style="left:1505px;top:1836px;width:47px;height:68px;background:#2b7cd3;border-radius:4px;background:linear-gradient(180deg,#4f9be6 0 25%,#2f7ad6 25% 50%,#2560c0 50% 75%,#1d4ea6 75% 100%);"></div>
<div style="left:1479px;top:1851px;width:38px;height:38px;background:#1f55b0;border-radius:4px;box-shadow:1px 1px 3px rgba(0,0,0,.3);"></div>
<span id="t70" class="t" style="top:1850.10px;font-size:30px;line-height:39px;color:#fff;left:1483px;font-weight:700;">W</span>
<div style="left:1602px;top:1820px;width:101px;height:101px;background:linear-gradient(180deg,#2ea7f4,#1f6ee6);border-radius:23px;"></div>
<svg style="left:1602px;top:1820px;" width="101" height="101" viewBox="0 0 101 101"><g stroke="#fff" stroke-width="8" stroke-linecap="round" fill="none"><path d="M44 24L71 74"/><path d="M57 24L28 74"/><path d="M18 62h66"/></g></svg>
<div style="left:1735px;top:1820px;width:101px;height:101px;background:linear-gradient(160deg,#2f6bf0,#1d4fd8);border-radius:23px;"></div>
<span id="t71" class="t" style="top:1852.47px;font-size:27.5px;line-height:36px;color:#fff;left:1748px;font-weight:700;letter-spacing:0.729px;">zoom</span>
<div style="left:1868px;top:1820px;width:101px;height:101px;background:#a62216;border-radius:23px;"></div>
<svg style="left:1868px;top:1820px;" width="101" height="101" viewBox="0 0 101 101"><path d="M24 74c6-14 24-24 50-22 6 1 6 7 0 8-12 0-28-10-28-30 0-8 8-8 8 0 0 18-12 40-24 48-6 3-9 0-6-4z" fill="none" stroke="#fff" stroke-width="5.500" stroke-linejoin="round"/></svg>
<svg style="left:1996px;top:1816px;" width="110" height="112" viewBox="0 0 110 112"><defs><radialGradient id="vp" cx="50%" cy="40%" r="65%"><stop offset="0" stop-color="#ffffff"/><stop offset=".75" stop-color="#e3e8ec"/><stop offset="1" stop-color="#aebcc7"/></radialGradient><clipPath id="vpc"><circle cx="56" cy="55" r="53"/></clipPath><linearGradient id="vpg" x1="0" y1="0" x2="1" y2="1"><stop offset="0" stop-color="#5fb03f"/><stop offset=".5" stop-color="#58a88a"/><stop offset="1" stop-color="#3b8fe0"/></linearGradient></defs><circle cx="56" cy="55" r="53" fill="url(#vp)"/><g clip-path="url(#vpc)" fill="none" stroke-width="13"><path d="M7 78C2 40 28 6 70 8" stroke="#62b23f"/><path d="M70 8C48 18 44 40 58 52s34 10 44 26" stroke="url(#vpg)"/><path d="M48 16c-2 22 10 34 22 44s14 30 4 48" stroke="url(#vpg)"/></g><circle cx="24" cy="88" r="28.500" fill="#fff"/><circle cx="24" cy="88" r="25" fill="#c48c4f"/><rect x="12" y="84" width="24" height="18" rx="2" fill="#fff"/><path d="M16.500 84v-6a7.500 7.500 0 0 1 15 0v6" fill="none" stroke="#fff" stroke-width="4.500"/></svg>
<div style="left:2148px;top:1818px;width:2px;height:115px;background:#4a4a4a;"></div>
<div style="left:2740px;top:1818px;width:2px;height:115px;background:#4a4a4a;"></div>
<div style="left:2194px;top:1820px;width:101px;height:101px;background:linear-gradient(180deg,#fff,#f1f1f1);border-radius:23px;"></div>
<svg style="left:2194px;top:1820px;" width="101" height="101" viewBox="0 0 101 101"><rect x="15" y="41" width="31" height="12" rx="6" fill="#5bc4ec"/><rect x="34" y="15" width="12" height="20" rx="6" fill="#5bc4ec"/><rect x="54" y="15" width="12" height="31" rx="6" fill="#3fb57f"/><rect x="72" y="34" width="14" height="12" rx="6" fill="#3fb57f"/><rect x="55" y="54" width="31" height="12" rx="6" fill="#ecb33f"/><rect x="55" y="72" width="12" height="14" rx="6" fill="#ecb33f"/><rect x="34" y="54" width="12" height="32" rx="6" fill="#df2f5d"/><rect x="15" y="54" width="13" height="12" rx="6" fill="#df2f5d"/></svg>
<div style="left:2327px;top:1820px;width:101px;height:101px;background:linear-gradient(180deg,#fff,#f1f1f1);border-radius:23px;"></div>
<svg style="left:2327px;top:1820px;" width="101" height="101" viewBox="0 0 101 101"><circle cx="76" cy="30" r="9" fill="#5b5fc7"/><rect x="62" y="43" width="26" height="30" rx="6" fill="#5b5fc7"/><circle cx="53" cy="27" r="12.500" fill="#7b83eb"/><path d="M34 44h40v26a20 20 0 0 1-40 0z" fill="#7b83eb"/></svg>
<div style="left:2339px;top:1851px;width:38px;height:38px;background:#4b53bc;border-radius:4px;box-shadow:1px 1px 3px rgba(0,0,0,.3);"></div>
<span id="t72" class="t" style="top:1850.10px;font-size:30px;line-height:39px;color:#fff;left:2348px;font-weight:700;">T</span>
<div style="left:2460px;top:1820px;width:101px;height:101px;background:linear-gradient(180deg,#3a3d42,#0a0a0c);border-radius:23px;"></div>
<svg style="left:2460px;top:1820px;" width="101" height="101" viewBox="0 0 101 101"><defs><radialGradient id="qt" cx="50%" cy="35%" r="70%"><stop offset="0" stop-color="#1d4fe0"/><stop offset=".6" stop-color="#2b8af0"/><stop offset="1" stop-color="#7fe0fb"/></radialGradient></defs><circle cx="50.500" cy="50.500" r="41" fill="#b8bcc2"/><circle cx="50.500" cy="50.500" r="28" fill="url(#qt)"/><path d="M52 52l30 34" stroke="#b8bcc2" stroke-width="14"/><path d="M52 52l14 16" stroke="#d0d3d8" stroke-width="12" stroke-linecap="round"/></svg>
<div style="left:2593px;top:1820px;width:101px;height:101px;background:linear-gradient(180deg,#fff,#f1f1f1);border-radius:23px;"></div>
<svg style="left:2593px;top:1820px;" width="101" height="101" viewBox="0 0 101 101"><path d="M69 14L30 50l39 37 16-8V22z" fill="#2f86d8"/><path d="M69 14v73l16-8V22z" fill="#3f9cf0"/><path d="M16 38l8-6 45 38v17z" fill="#2a6fc0"/><path d="M16 63l8 6 45-38V14z" fill="#2f86d8"/><path d="M69 33L44 50.500 69 68z" fill="#fff"/></svg>
<svg style="left:2792px;top:1810px;" width="91" height="118" viewBox="0 0 91 118"><defs><linearGradient id="tr" x1="0" y1="0" x2="1" y2="0"><stop offset="0" stop-color="#47494b"/><stop offset=".45" stop-color="#737577"/><stop offset="1" stop-color="#434547"/></linearGradient></defs><path d="M1 17h89l-9 92c-1 10-70 10-71 0z" fill="url(#tr)" opacity=".92"/><ellipse cx="45.500" cy="17" rx="44.500" ry="9" fill="#5f6163"/><path d="M8 16l6-11 10 3 7-8 9 7 8-6 8 6 9-3 6 8 10 3-5 7H14z" fill="#dcdcdc"/><path d="M14 5l10 3-6 9zM48 1l8 6-4 9zM73 4l6 8-10 3z" fill="#f6f6f6"/><path d="M28 10l10-2 3 8-11 1z" fill="#4bb7e8"/><path d="M38 8l6 1-1 7-2 0z" fill="#6cc04a"/><path d="M52 8l9-1 3 9-10 2z" fill="#3b5fa8"/><path d="M58 10l6 1-1 5-5 1z" fill="#e0863a"/><path d="M44 12l5 1-2 8-5-1z" fill="#c8442e"/></svg>
<div style="left:184px;top:1942px;width:8px;height:8px;background:#a8a8a8;border-radius:50%;"></div>
<div style="left:450px;top:1942px;width:8px;height:8px;background:#a8a8a8;border-radius:50%;"></div>
<div style="left:716px;top:1942px;width:8px;height:8px;background:#a8a8a8;border-radius:50%;"></div>
<div style="left:849px;top:1942px;width:8px;height:8px;background:#a8a8a8;border-radius:50%;"></div>
<div style="left:1114px;top:1942px;width:8px;height:8px;background:#a8a8a8;border-radius:50%;"></div>
<div style="left:1381px;top:1942px;width:8px;height:8px;background:#a8a8a8;border-radius:50%;"></div>
<div style="left:2045px;top:1942px;width:8px;height:8px;background:#a8a8a8;border-radius:50%;"></div>
<div style="left:2239px;top:1942px;width:8px;height:8px;background:#a8a8a8;border-radius:50%;"></div>
<div style="left:2372px;top:1942px;width:8px;height:8px;background:#a8a8a8;border-radius:50%;"></div>
<div style="left:2506px;top:1942px;width:8px;height:8px;background:#a8a8a8;border-radius:50%;"></div>
<div style="left:2638px;top:1942px;width:8px;height:8px;background:#a8a8a8;border-radius:50%;"></div>
</div>
</body></html>
